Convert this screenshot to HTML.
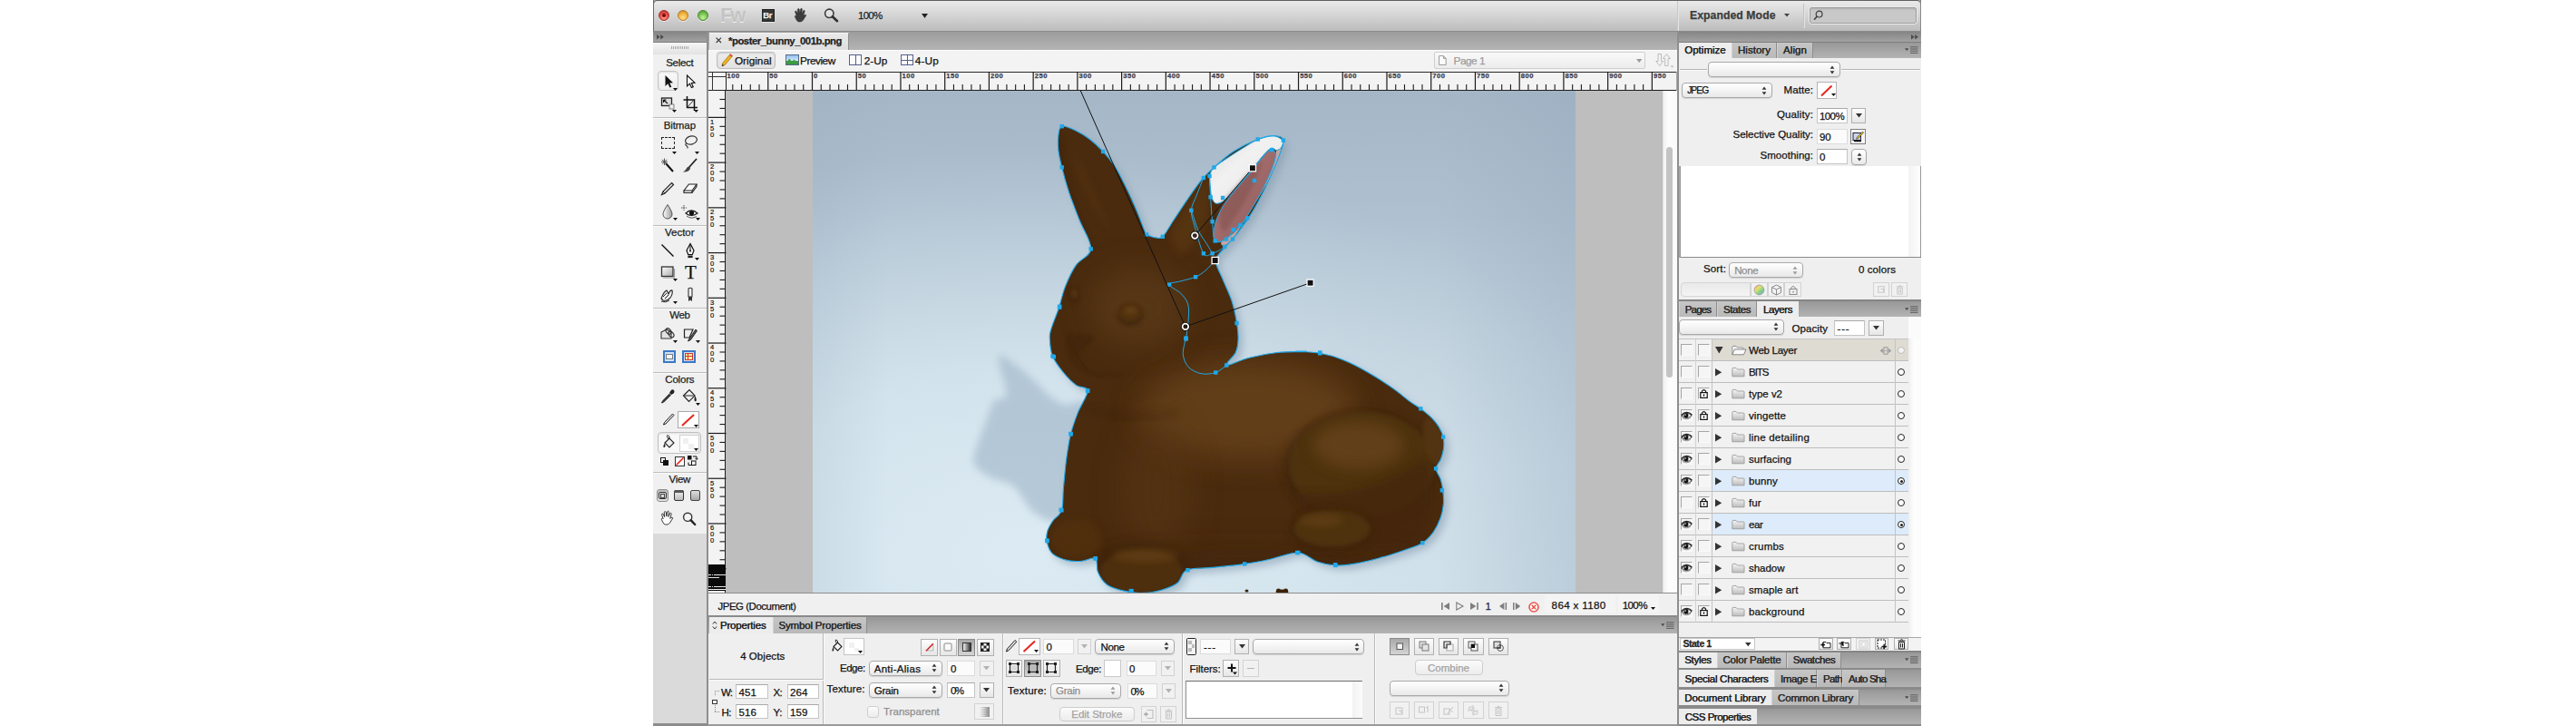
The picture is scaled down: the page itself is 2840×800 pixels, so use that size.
<!DOCTYPE html><html><head><meta charset="utf-8"><title>Fireworks</title><style>
html,body{margin:0;padding:0;background:#fff;}
body{width:2840px;height:800px;overflow:hidden;position:relative;font-family:"Liberation Sans",sans-serif;}
#r{position:absolute;left:0;top:0;width:2840px;height:800px;overflow:hidden;}
#r div{position:absolute;box-sizing:border-box;}
#r svg{position:absolute;overflow:visible;}
.t{position:absolute;white-space:nowrap;line-height:16px;height:16px;-webkit-text-stroke:.25px;}
.strip{background:linear-gradient(#989898,#b3b3b3);}
.tabA{background:#ededed;}
.tabI{background:linear-gradient(#c6c6c6,#b9b9b9);border-right:1px solid #8e8e8e;border-left:1px solid #d0d0d0;}
.dd{background:linear-gradient(#ffffff,#e9e9e9);border:1px solid #a9a9a9;border-radius:4px;box-shadow:0 1px 1px rgba(0,0,0,.12);}
.fld{background:#fff;border:1px solid #c4c4c4;border-top-color:#a8a8a8;}
.fldd{background:#fbfbfb;border:1px solid #dcdcdc;}
.btn{background:linear-gradient(#fdfdfd,#e6e6e6);border:1px solid #b0b0b0;}
.btnd{background:#f1f1f1;border:1px solid #d2d2d2;}
.btnp{background:linear-gradient(#a9a9a9,#d4d4d4);border:1px solid #8a8a8a;}
</style></head><body><div id="r">
<div style="left:720px;top:0px;width:1398px;height:800px;background:#a7a7a7;border-left:1px solid #6a6a6a;border-right:1.5px solid #7c7c7c;"></div>
<div style="left:720px;top:0px;width:1398px;height:34.5px;background:linear-gradient(#eaeaea 0%,#d6d6d6 45%,#bcbcbc 100%);border-top:1px solid #5f5f5f;border-bottom:1px solid #8b8b8b;border-left:1px solid #6a6a6a;border-right:1px solid #8a8a8a;border-radius:5px 5px 0 0;"></div>
<div style="left:725.8px;top:10.8px;width:12px;height:12px;border-radius:50%;background:radial-gradient(circle at 50% 75%,#ff9a8a 0%,#e24a43 55%,#a8312c 100%);border:1px solid #a8312c;box-shadow:0 1px 0 rgba(255,255,255,.6);"></div>
<div style="left:729.8px;top:14.8px;width:4px;height:4px;border-radius:50%;background:#7a0b0b;"></div>
<div style="left:746.9px;top:10.8px;width:12px;height:12px;border-radius:50%;background:radial-gradient(circle at 50% 75%,#ffe08a 0%,#f0b13c 55%,#b6802a 100%);border:1px solid #b6802a;box-shadow:0 1px 0 rgba(255,255,255,.6);"></div>
<div style="left:768.6px;top:10.8px;width:12px;height:12px;border-radius:50%;background:radial-gradient(circle at 50% 75%,#c6f09a 0%,#74c24c 55%,#4b8a34 100%);border:1px solid #4b8a34;box-shadow:0 1px 0 rgba(255,255,255,.6);"></div>
<span class="t" style="left:794px;top:4px;font-size:22px;font-weight:700;line-height:26px;height:26px;letter-spacing:-2.2px;color:#c3c3c3;-webkit-text-stroke:0;text-shadow:0 1px 0 #f2f2f2;">Fw</span>
<div style="left:839.8px;top:9.8px;width:14px;height:13.8px;background:#353535;border:1px solid #222;box-shadow:0 1px 0 #e6e6e6;"></div>
<span class="t" style="left:841.3px;top:8.6px;font-size:9.5px;font-weight:700;color:#efefef;letter-spacing:-.4px;">Br</span>
<svg style="left:873px;top:8px" width="18" height="18" viewBox="0 0 18 18"><path d="M5.2 9.5 L3.6 5.2 Q3.4 4.2 4.3 4.1 Q5 4 5.4 4.9 L6.6 7.6 L6.3 2.6 Q6.4 1.6 7.3 1.6 Q8.1 1.6 8.3 2.6 L8.8 7 L9.6 2 Q9.9 1.1 10.7 1.3 Q11.5 1.5 11.4 2.5 L10.9 7.4 L12.6 3.8 Q13.1 3 13.8 3.4 Q14.5 3.8 14.2 4.7 L12.7 9.3 Q13.9 8.3 15 8.3 Q16 8.5 15.6 9.3 L12.4 14.2 Q11.4 16 9.2 16 L7.6 16 Q5.8 15.6 5 13.8 L3.4 10.6 Q3.2 9.4 4 9.2 Q4.7 9 5.2 9.5Z" fill="#3d3d3d" stroke="#2b2b2b" stroke-width=".5"/></svg>
<svg style="left:907px;top:8px" width="19" height="18" viewBox="0 0 19 18"><circle cx="7.3" cy="6.8" r="4.7" fill="rgba(255,255,255,.25)" stroke="#3a3a3a" stroke-width="1.6"/><path d="M10.8 10.2 L16 15.2" stroke="#2e2e2e" stroke-width="2.6" stroke-linecap="round"/></svg>
<span class="t" style="left:946.00px;top:9.00px;font-size:11.5px;color:#222;letter-spacing:-0.728px;">100%</span>
<svg style="left:1015.5px;top:14.5px" width="8" height="6"><path d="M0 0H7L3.5 5Z" fill="#222"/></svg>
<div style="left:1849px;top:1px;width:1px;height:33px;background:#c9c9c9;"></div>
<div style="left:1850px;top:1px;width:1px;height:33px;background:#e4e4e4;"></div>
<span class="t" style="left:1863.00px;top:8.50px;font-size:12.2px;font-weight:700;color:#3c3c3c;letter-spacing:0.082px;">Expanded Mode</span>
<svg style="left:1967px;top:15px" width="7" height="5"><path d="M0 0H6L3 3.5Z" fill="#444"/></svg>
<div style="left:1987.5px;top:4px;width:1px;height:27px;background:#c4c4c4;"></div>
<div style="left:1988.5px;top:4px;width:1px;height:27px;background:#e2e2e2;"></div>
<div style="left:1993.5px;top:7.2px;width:120.5px;height:19.6px;background:#c8c8c8;border:1.5px solid #ececec;border-radius:3.5px;box-shadow:inset 0 0 0 1px #9c9c9c,inset 0 2px 2px rgba(0,0,0,.12);"></div>
<svg style="left:1998px;top:10px" width="14" height="14" viewBox="0 0 14 14"><circle cx="7.6" cy="5.6" r="3.4" fill="none" stroke="#3f3f3f" stroke-width="1.2"/><path d="M5.3 8 L2 11.8" stroke="#3f3f3f" stroke-width="1.6"/></svg>
<div style="left:720px;top:34.5px;width:58.5px;height:766px;background:#dadada;"></div>
<div style="left:720px;top:34.5px;width:58.5px;height:12px;background:linear-gradient(#858585,#a2a2a2);border-bottom:1px solid #7d7d7d;"></div>
<svg style="left:724px;top:37.5px" width="9" height="6"><path d="M0 0L3.6 2.7L0 5.4ZM4.2 0L7.8 2.7L4.2 5.4Z" fill="#4a4a4a"/></svg>
<div style="left:720px;top:46.5px;width:58.5px;height:541px;background:#f0f0f0;"></div>
<div style="left:720px;top:46.5px;width:58.5px;height:13.5px;background:linear-gradient(#f6f6f6,#e2e2e2);"></div>
<div style="left:739.6px;top:51.2px;width:1px;height:3px;background:#a8a8a8;"></div>
<div style="left:741.6px;top:51.2px;width:1px;height:3px;background:#a8a8a8;"></div>
<div style="left:743.6px;top:51.2px;width:1px;height:3px;background:#a8a8a8;"></div>
<div style="left:745.6px;top:51.2px;width:1px;height:3px;background:#a8a8a8;"></div>
<div style="left:747.6px;top:51.2px;width:1px;height:3px;background:#a8a8a8;"></div>
<div style="left:749.6px;top:51.2px;width:1px;height:3px;background:#a8a8a8;"></div>
<div style="left:751.6px;top:51.2px;width:1px;height:3px;background:#a8a8a8;"></div>
<div style="left:753.6px;top:51.2px;width:1px;height:3px;background:#a8a8a8;"></div>
<div style="left:755.6px;top:51.2px;width:1px;height:3px;background:#a8a8a8;"></div>
<div style="left:757.6px;top:51.2px;width:1px;height:3px;background:#a8a8a8;"></div>
<div style="left:778.5px;top:34.5px;width:2px;height:766px;background:#8f8f8f;"></div>
<div style="left:720px;top:797px;width:58.5px;height:3px;background:#8c8c8c;"></div>
<div style="left:720px;top:128.5px;width:58.5px;height:1px;background:#bdbdbd;"></div>
<div style="left:720px;top:129.5px;width:58.5px;height:1px;background:#fafafa;"></div>
<div style="left:720px;top:248px;width:58.5px;height:1px;background:#bdbdbd;"></div>
<div style="left:720px;top:249px;width:58.5px;height:1px;background:#fafafa;"></div>
<div style="left:720px;top:339.2px;width:58.5px;height:1px;background:#bdbdbd;"></div>
<div style="left:720px;top:340.2px;width:58.5px;height:1px;background:#fafafa;"></div>
<div style="left:720px;top:410.2px;width:58.5px;height:1px;background:#bdbdbd;"></div>
<div style="left:720px;top:411.2px;width:58.5px;height:1px;background:#fafafa;"></div>
<div style="left:720px;top:519.9px;width:58.5px;height:1px;background:#bdbdbd;"></div>
<div style="left:720px;top:520.9px;width:58.5px;height:1px;background:#fafafa;"></div>
<span class="t" style="left:734.15px;top:61.00px;font-size:11.5px;color:#1c1c1c;letter-spacing:-0.277px;">Select</span>
<span class="t" style="left:731.65px;top:129.50px;font-size:11.5px;color:#1c1c1c;letter-spacing:-0.082px;">Bitmap</span>
<span class="t" style="left:733.05px;top:248.20px;font-size:11.5px;color:#1c1c1c;letter-spacing:-0.017px;">Vector</span>
<span class="t" style="left:738.30px;top:339.00px;font-size:11.5px;color:#1c1c1c;letter-spacing:-0.479px;">Web</span>
<span class="t" style="left:733.30px;top:409.80px;font-size:11.5px;color:#1c1c1c;letter-spacing:-0.205px;">Colors</span>
<span class="t" style="left:737.55px;top:520.30px;font-size:11.5px;color:#1c1c1c;letter-spacing:-0.304px;">View</span>
<div style="left:725.3px;top:78.2px;width:22.7px;height:22.2px;background:linear-gradient(#fafafa,#ededed);border:1px solid #c4c4c4;border-radius:4px;box-shadow:inset 0 1px 2px rgba(0,0,0,.12);"></div>
<svg style="left:727.3px;top:79.8px" width="20" height="20" viewBox="0 0 20 20"><path d="M6.5 3 L6.5 15 L9.4 12.2 L11.4 16.6 L13.3 15.7 L11.3 11.4 L15 11.2Z" fill="#111"/></svg>
<svg style="left:741.5px;top:96.5px" width="5" height="4"><path d="M0 0H5L2.5 3Z" fill="#111"/></svg>
<svg style="left:750.9px;top:80.4px" width="20" height="20" viewBox="0 0 20 20"><path d="M6.5 3 L6.5 15 L9.4 12.2 L11.4 16.6 L13.3 15.7 L11.3 11.4 L15 11.2Z" fill="#fff" stroke="#111" stroke-width="1.1"/></svg>
<svg style="left:726.3px;top:104px" width="20" height="20" viewBox="0 0 20 20"><rect x="3.5" y="4" width="11" height="8.5" fill="#ddd" stroke="#222" stroke-width="1.3"/><path d="M5.5 6 L10 10 M5.5 6 h3 M5.5 6 v3" stroke="#111" stroke-width="1.1" fill="none"/><rect x="12" y="11" width="5" height="5" fill="#eee" stroke="#666" stroke-width=".8"/></svg>
<svg style="left:741px;top:121px" width="5" height="4"><path d="M0 0H5L2.5 3Z" fill="#111"/></svg>
<svg style="left:750.9px;top:104px" width="20" height="20" viewBox="0 0 20 20"><path d="M6.5 2 V14.5 H18 M2.5 6 H14.5 V18" stroke="#111" stroke-width="1.5" fill="none"/><path d="M6.5 14.5 L15 5" stroke="#333" stroke-width="1"/></svg>
<svg style="left:765px;top:121px" width="5" height="4"><path d="M0 0H5L2.5 3Z" fill="#111"/></svg>
<div style="left:729px;top:150.6px;width:14.5px;height:13.4px;border:1.2px dashed #222;"></div>
<svg style="left:741px;top:167px" width="5" height="4"><path d="M0 0H5L2.5 3Z" fill="#111"/></svg>
<svg style="left:750.9px;top:147.4px" width="20" height="20" viewBox="0 0 20 20"><ellipse cx="11" cy="7.5" rx="6.5" ry="4.5" fill="none" stroke="#333" stroke-width="1.2" transform="rotate(-15 11 7.5)"/><path d="M6 10.5 Q4 12 5.5 13.5 Q7.5 14 7 16.5" stroke="#333" stroke-width="1.1" fill="none"/></svg>
<svg style="left:766px;top:167px" width="5" height="4"><path d="M0 0H5L2.5 3Z" fill="#111"/></svg>
<svg style="left:726.3px;top:172.4px" width="20" height="20" viewBox="0 0 20 20"><path d="M8 8 L16 17" stroke="#111" stroke-width="2"/><path d="M6.5 2.5 V10 M3 6.2 H10 M4 3.8 L9 8.8 M9 3.8 L4 8.8" stroke="#444" stroke-width=".9"/></svg>
<svg style="left:751.4px;top:172.4px" width="20" height="20" viewBox="0 0 20 20"><path d="M17 3 L9 12" stroke="#222" stroke-width="1.8"/><path d="M9 11 Q6 12 5 15 Q3.5 17 2 17.2 Q6 18 8.5 16 Q10.5 14 10 12Z" fill="#444"/></svg>
<svg style="left:726px;top:198px" width="20" height="20" viewBox="0 0 20 20"><path d="M14.5 3.5 L16.5 5.5 L7 15 L3.5 16.5 L5 13Z" fill="#eee" stroke="#222" stroke-width="1.2"/><path d="M5 13 L7 15" stroke="#222"/></svg>
<svg style="left:751px;top:198px" width="20" height="20" viewBox="0 0 20 20"><path d="M8.5 5 L17 5 L12 12 L3 12Z" fill="#fafafa" stroke="#222" stroke-width="1.1"/><path d="M3 12 V14.5 H12 V12 M12 14.5 L17 7.5 V5" fill="none" stroke="#222" stroke-width="1.1"/></svg>
<svg style="left:726px;top:223px" width="20" height="20" viewBox="0 0 20 20"><path d="M10 2.5 Q15 10 15 13 A5 5 0 0 1 5 13 Q5 10 10 2.5Z" fill="url(#dropg)" stroke="#555" stroke-width="1"/><defs><linearGradient id="dropg" x1="0" x2="1"><stop offset="0" stop-color="#fff"/><stop offset="1" stop-color="#9a9a9a"/></linearGradient></defs></svg>
<svg style="left:742px;top:240px" width="5" height="4"><path d="M0 0H5L2.5 3Z" fill="#111"/></svg>
<svg style="left:752px;top:224px" width="20" height="20" viewBox="0 0 20 20"><path d="M4 11 Q10 5 17 11 Q10 16 4 11Z" fill="#fff" stroke="#222" stroke-width="1.2"/><circle cx="10.5" cy="10.8" r="2.6" fill="#111"/><path d="M2 2 V8 M-1 5 H5" stroke="#333" stroke-width=".9" stroke-dasharray="1.5 1"/><path d="M5 14 Q10 18 16 14.5" stroke="#555" fill="none"/></svg>
<svg style="left:767px;top:240px" width="5" height="4"><path d="M0 0H5L2.5 3Z" fill="#111"/></svg>
<svg style="left:726px;top:266px" width="20" height="20" viewBox="0 0 20 20"><path d="M3.5 3.5 L16.5 16.5" stroke="#111" stroke-width="1.4"/></svg>
<svg style="left:751px;top:267px" width="20" height="20" viewBox="0 0 20 20"><path d="M10 1.5 L14 9 L12.3 13.5 H7.7 L6 9Z" fill="#f4f4f4" stroke="#111" stroke-width="1.2"/><path d="M10 3 V9" stroke="#111"/><circle cx="10" cy="9.6" r="1" fill="#111"/><rect x="7.4" y="14.5" width="5.2" height="2.6" fill="#222"/></svg>
<svg style="left:766px;top:284px" width="5" height="4"><path d="M0 0H5L2.5 3Z" fill="#111"/></svg>
<svg style="left:726px;top:290px" width="20" height="20" viewBox="0 0 20 20"><rect x="3.5" y="4" width="12.5" height="10.5" fill="url(#rg)" stroke="#333" stroke-width="1.3"/><path d="M5 16 H17.5 V6" stroke="#999" stroke-width="1.2" fill="none"/><defs><linearGradient id="rg" x1="0" y1="0" x2="1" y2="1"><stop offset="0" stop-color="#fff"/><stop offset="1" stop-color="#aaa"/></linearGradient></defs></svg>
<svg style="left:742px;top:307px" width="5" height="4"><path d="M0 0H5L2.5 3Z" fill="#111"/></svg>
<span class="t" style="left:755px;top:288px;font-family:'Liberation Serif',serif;font-size:21px;line-height:24px;height:24px;color:#111;">T</span>
<svg style="left:726px;top:315px" width="20" height="20" viewBox="0 0 20 20"><path d="M3 14 Q6 6 9 5 L11 9 Q13 4 15 5 Q16 9 13 13 Q10 17 5 16 Z" fill="#eee" stroke="#222" stroke-width="1.1"/><path d="M5 12 L9 8 M7 14 L11 10 M3 17 Q8 19 12 16" stroke="#222" stroke-width="1" fill="none"/></svg>
<svg style="left:742px;top:332px" width="5" height="4"><path d="M0 0H5L2.5 3Z" fill="#111"/></svg>
<svg style="left:751px;top:315px" width="20" height="20" viewBox="0 0 20 20"><path d="M8 3 Q10 1.5 12 3 V12 H8Z" fill="#f4f4f4" stroke="#333" stroke-width="1.1"/><path d="M8 12 H12 V17 L10 15.6 L8 17Z" fill="#333"/></svg>
<svg style="left:726px;top:358.7px" width="20" height="20" viewBox="0 0 20 20"><path d="M3 7 L9 4 L14 7 V14 H3Z" fill="#e2e2e2" stroke="#333" stroke-width="1.1"/><ellipse cx="11" cy="6" rx="2.4" ry="3.6" fill="none" stroke="#333" stroke-width="1.2" transform="rotate(-40 11 6)"/><ellipse cx="14" cy="9.5" rx="2.4" ry="3.6" fill="none" stroke="#333" stroke-width="1.2" transform="rotate(-40 14 9.5)"/></svg>
<svg style="left:742px;top:375px" width="5" height="4"><path d="M0 0H5L2.5 3Z" fill="#111"/></svg>
<svg style="left:751px;top:358.7px" width="20" height="20" viewBox="0 0 20 20"><path d="M3.5 4 H13 L9 13 H3.5Z" fill="#eee" stroke="#222" stroke-width="1.2"/><path d="M16 4 L9 14 L7.5 17 L10.5 15.5 L17.5 5.5Z" fill="#555" stroke="#111" stroke-width=".8"/></svg>
<svg style="left:767px;top:375px" width="5" height="4"><path d="M0 0H5L2.5 3Z" fill="#111"/></svg>
<div style="left:730.5px;top:385.5px;width:14.5px;height:14.5px;background:#cfe2f7;border:2px solid #3b78c8;"></div>
<div style="left:733.5px;top:389.5px;width:8.5px;height:6px;background:#f6f6f6;border:1px solid #7a7a7a;"></div>
<div style="left:752px;top:385.5px;width:15px;height:14.5px;background:#cfe2f7;border:2px solid #3b78c8;"></div>
<div style="left:755px;top:388.5px;width:9px;height:8px;background:#ffe9a8;border:1px solid #d03a2a;"></div>
<div style="left:755px;top:391.5px;width:9px;height:1px;background:#d03a2a;"></div>
<div style="left:758px;top:388.5px;width:1px;height:8px;background:#d03a2a;"></div>
<svg style="left:726px;top:426.8px" width="20" height="20" viewBox="0 0 20 20"><path d="M16.5 2.5 Q18.5 4.5 16.5 6.5 L14 8 L12 6 L13.5 3.5 Q15 1.5 16.5 2.5Z" fill="#222"/><path d="M12.5 7 L5 14.5 L3.5 17 L6 15.5 L13.5 8" fill="#f0f0f0" stroke="#222" stroke-width="1.1"/></svg>
<svg style="left:750px;top:426.8px" width="20" height="20" viewBox="0 0 20 20"><path d="M3.5 9 L10 2.5 L16 9 L9.5 15.5Z" fill="#f2f2f2" stroke="#222" stroke-width="1.2"/><path d="M5 9 H14.5" stroke="#222"/><path d="M16 9 Q18.5 12.5 17.5 15 Q16 16 15.5 14 Q15.5 12 16 9Z" fill="#222"/></svg>
<svg style="left:767px;top:444px" width="5" height="4"><path d="M0 0H5L2.5 3Z" fill="#111"/></svg>
<svg style="left:727px;top:452px" width="20" height="20" viewBox="0 0 20 20"><path d="M14.5 4 L16 5.5 L7 15 L4.5 16 L5.5 13.5Z" fill="#ddd" stroke="#222" stroke-width="1"/></svg>
<div style="left:747.4px;top:453px;width:23.3px;height:19px;background:#fff;border:1px solid #a9a9a9;"></div>
<svg style="left:749px;top:454.5px" width="20" height="16"><path d="M3 14 L16 2" stroke="#e8261c" stroke-width="2"/></svg>
<svg style="left:764.5px;top:467.5px" width="5" height="4"><path d="M0 0H5L2.5 3Z" fill="#111"/></svg>
<div style="left:725px;top:476.3px;width:47.5px;height:23.3px;background:#f8f8f8;border:1px solid #c0c0c0;border-radius:4px;box-shadow:inset 0 1px 2px rgba(0,0,0,.1);"></div>
<svg style="left:727.7px;top:478px" width="20" height="20" viewBox="0 0 20 20"><path d="M5 10 L10 5 L15 10 L10 15Z" fill="#eee" stroke="#222" stroke-width="1.1"/><path d="M9 6 Q6 1.5 8.5 1.5 Q10.5 2 10 6" fill="none" stroke="#222"/><path d="M5 10 Q3 13 3.5 15 Q5 15.5 5.5 13.5Z" fill="#222"/></svg>
<div style="left:748.5px;top:478.5px;width:22.2px;height:19px;background:#fff;border:1px solid #d0d0d0;"></div>
<div style="left:753px;top:483px;width:6px;height:6px;background:#f0f0f0;"></div>
<div style="left:759px;top:489px;width:6px;height:6px;background:#f0f0f0;"></div>
<svg style="left:764.5px;top:493.5px" width="5" height="4"><path d="M0 0H5L2.5 3Z" fill="#111"/></svg>
<div style="left:727.5px;top:504px;width:6px;height:6px;background:#fff;border:1px solid #111;"></div>
<div style="left:730.5px;top:506.5px;width:6.5px;height:6.5px;background:#111;"></div>
<div style="left:743.5px;top:502.5px;width:11px;height:11px;background:#fff;border:1px solid #333;"></div>
<svg style="left:743.5px;top:502.5px" width="11" height="11"><path d="M1.5 9.5 L9.5 1.5" stroke="#e8261c" stroke-width="1.6"/></svg>
<svg style="left:754px;top:498px" width="20" height="20" viewBox="0 0 20 20"><rect x="4" y="4" width="4.5" height="4.5" fill="#111"/><rect x="8.5" y="10" width="4.5" height="4.5" fill="#fff" stroke="#111"/><path d="M10 5 h4 v3 M12.6 7 l1.4 1.6 l1.4 -1.6 M8 14.5 h-3 v-3" stroke="#111" fill="none" stroke-width="1"/></svg>
<div style="left:723.8px;top:539.3px;width:13.6px;height:13.6px;background:linear-gradient(#bdbdbd,#e2e2e2);border:1px solid #8c8c8c;border-radius:3px;"></div>
<div style="left:726.3px;top:541.8px;width:8.6px;height:8.6px;background:#d9d9d9;border:1px solid #333;border-radius:2px;"></div>
<div style="left:727.8px;top:544.3px;width:5.6px;height:4.6px;border:1px solid #444;"></div>
<div style="left:743px;top:540.3px;width:11.4px;height:11.4px;background:linear-gradient(#eee,#bbb);border:1px solid #333;border-radius:2px;"></div>
<div style="left:743px;top:540.3px;width:11.4px;height:3px;background:#555;border-radius:2px 2px 0 0;"></div>
<div style="left:760.6px;top:540.3px;width:11.4px;height:11.4px;background:linear-gradient(#ddd,#a9a9a9);border:1px solid #444;border-radius:2px;"></div>
<svg style="left:726px;top:562.4px" width="20" height="20" viewBox="0 0 20 20"><path d="M6.2 10.5 L4.6 6.2 Q4.4 5.2 5.3 5.1 Q6 5 6.4 5.9 L7.6 8.6 L7.3 3.6 Q7.4 2.6 8.3 2.6 Q9.1 2.6 9.3 3.6 L9.8 8 L10.6 3 Q10.9 2.1 11.7 2.3 Q12.5 2.5 12.4 3.5 L11.9 8.4 L13.6 4.8 Q14.1 4 14.8 4.4 Q15.5 4.8 15.2 5.7 L13.7 10.3 Q14.9 9.3 16 9.3 Q17 9.5 16.6 10.3 L13.4 15.2 Q12.4 17 10.2 17 L8.6 17 Q6.8 16.6 6 14.8 L4.4 11.6 Q4.2 10.4 5 10.2 Q5.7 10 6.2 10.5Z" fill="#fff" stroke="#222" stroke-width=".9" transform="translate(-1 -1)"/></svg>
<svg style="left:750px;top:562.4px" width="20" height="20" viewBox="0 0 20 20"><circle cx="8.2" cy="7.8" r="4.6" fill="#f4f4f4" stroke="#333" stroke-width="1.4"/><path d="M11.6 11.2 L16.2 16" stroke="#222" stroke-width="2.4" stroke-linecap="round"/></svg>
<div style="left:780.5px;top:34.5px;width:1068px;height:20px;background:linear-gradient(#9c9c9c,#b4b4b4);"></div>
<div style="left:781.5px;top:35.5px;width:154.5px;height:19px;background:linear-gradient(#e9e9e9,#dedede);border-right:1px solid #8f8f8f;border-top:1px solid #f4f4f4;"></div>
<svg style="left:788.6px;top:41.2px" width="7" height="7"><path d="M.6 .6L6 6M6 .6L.6 6" stroke="#333" stroke-width="1.1"/></svg>
<span class="t" style="left:803.00px;top:36.70px;font-size:11.3px;font-weight:700;color:#1f1f1f;letter-spacing:-0.454px;">*poster_bunny_001b.png</span>
<div style="left:780.5px;top:54.5px;width:1068px;height:24.5px;background:#f3f3f3;border-top:1px solid #fbfbfb;"></div>
<div style="left:790.3px;top:56.5px;width:65.2px;height:19.5px;background:linear-gradient(#ececec,#e2e2e2);border:1px solid #bdbdbd;border-radius:4px;box-shadow:inset 0 1px 2px rgba(0,0,0,.12);"></div>
<svg style="left:795px;top:58px" width="14" height="16" viewBox="0 0 14 16"><path d="M10.2 1.6 L12.6 3.6 L4.2 13.6 L1 15 L1.6 11.6Z" fill="#f2b01e" stroke="#9a6a10" stroke-width=".7"/><path d="M10.2 1.6 L12.6 3.6 L11.4 5 L9 3Z" fill="#e0564a"/><path d="M1 15 L1.4 12.6 L3 14.1Z" fill="#333"/></svg>
<span class="t" style="left:809.90px;top:58.80px;font-size:11.8px;color:#111;letter-spacing:0.005px;">Original</span>
<div style="left:866.4px;top:60.2px;width:14.2px;height:11.8px;background:linear-gradient(#8fc0ee 0%,#cfe6fa 55%,#49a84a 56%,#2f8a37 100%);border:1px solid #5a6b8c;"></div>
<svg style="left:867.4px;top:61.2px" width="12.2" height="9.8" viewBox="0 0 12.2 9.8"><path d="M0 8 L3.2 3.6 L6 7 L8.4 4.6 L12.2 8.6 V9.8 H0Z" fill="#3b9c43"/></svg>
<span class="t" style="left:882.00px;top:58.80px;font-size:11.8px;color:#111;letter-spacing:-0.452px;">Preview</span>
<div style="left:936px;top:60.2px;width:14.4px;height:11.8px;background:#fbfbfb;border:1px solid #55608c;"></div>
<div style="left:942.7px;top:60.2px;width:1px;height:11.8px;background:#55608c;"></div>
<span class="t" style="left:952.80px;top:58.80px;font-size:11.8px;color:#111;letter-spacing:0.006px;">2-Up</span>
<div style="left:993px;top:60.2px;width:14.4px;height:11.8px;background:#fbfbfb;border:1px solid #55608c;"></div>
<div style="left:999.7px;top:60.2px;width:1px;height:11.8px;background:#55608c;"></div>
<div style="left:993px;top:65.6px;width:14.4px;height:1px;background:#55608c;"></div>
<span class="t" style="left:1008.80px;top:58.80px;font-size:11.8px;color:#111;letter-spacing:0.156px;">4-Up</span>
<div style="left:1580.5px;top:57px;width:233.2px;height:19px;background:linear-gradient(#f9f9f9,#ececec);border:1px solid #cfcfcf;border-radius:2px;"></div>
<svg style="left:1585.5px;top:61px" width="9" height="11" viewBox="0 0 9 11"><path d="M.6 .6 H5.4 L8.2 3.4 V10.4 H.6Z M5.4 .6 V3.4 H8.2" fill="#fdfdfd" stroke="#9a9a9a" stroke-width="1"/></svg>
<span class="t" style="left:1602.50px;top:58.80px;font-size:11.8px;color:#9c9c9c;letter-spacing:-0.483px;">Page 1</span>
<svg style="left:1804px;top:64.5px" width="7" height="5"><path d="M0 0H6.4L3.2 4Z" fill="#9a9a9a"/></svg>
<svg style="left:1825px;top:58px" width="22" height="18" viewBox="0 0 22 18"><path d="M3 1.5 H6.5 V9.5 H8.8 L4.8 14.5 L.7 9.5 H3Z" fill="#f2f2f2" stroke="#bdbdbd" stroke-width="1"/><path d="M10.6 14.5 H14.1 V6.5 H16.4 L12.4 1.5 L8.3 6.5 H10.6Z" fill="#f2f2f2" stroke="#bdbdbd" stroke-width="1"/><path d="M16.5 14.5 H20.5 L18.5 16.8Z" fill="#bdbdbd"/></svg>
<div style="left:800px;top:99.5px;width:1032.5px;height:553.5px;background:#bebebe;"></div>
<svg style="left:895.5px;top:99.5px;overflow:hidden" width="841.5" height="553.5" viewBox="895.5 99.5 841.5 553.5"><defs>
<linearGradient id="bgv" x1="0" y1="0" x2="0" y2="1"><stop offset="0" stop-color="#a5b7c7"/><stop offset=".25" stop-color="#afc1d0"/><stop offset=".5" stop-color="#c0d1dd"/><stop offset=".75" stop-color="#cddde8"/><stop offset="1" stop-color="#d1e1eb"/></linearGradient>
<radialGradient id="bgl" cx="1130" cy="610" r="700" gradientUnits="userSpaceOnUse" gradientTransform="translate(1130 610) scale(1 .64) translate(-1130 -610)"><stop offset="0" stop-color="#dcebf3" stop-opacity="1"/><stop offset=".45" stop-color="#d6e6ef" stop-opacity=".8"/><stop offset=".8" stop-color="#cbdce7" stop-opacity=".3"/><stop offset="1" stop-color="#c2d3df" stop-opacity="0"/></radialGradient>
<linearGradient id="bge" x1="0" y1="0" x2="1" y2="0"><stop offset="0" stop-color="#8fa4b8" stop-opacity=".16"/><stop offset=".1" stop-color="#8fa4b8" stop-opacity="0"/><stop offset=".82" stop-color="#8fa4b8" stop-opacity="0"/><stop offset="1" stop-color="#8fa4b8" stop-opacity=".3"/></linearGradient>
<linearGradient id="pinkg" x1="0" y1="0" x2="1" y2="1"><stop offset="0" stop-color="#b48080"/><stop offset=".6" stop-color="#9c6666"/><stop offset="1" stop-color="#7b4a44"/></linearGradient>
<linearGradient id="whiteg" x1="0" y1="0" x2="1" y2="1"><stop offset="0" stop-color="#d9d9d9"/><stop offset=".4" stop-color="#f1f1f1"/><stop offset="1" stop-color="#e6e6e6"/></linearGradient>
<filter id="blur16" x="-50%" y="-50%" width="200%" height="200%"><feGaussianBlur stdDeviation="16"/></filter>
<filter id="blur8" x="-40%" y="-40%" width="180%" height="180%"><feGaussianBlur stdDeviation="8"/></filter>
<filter id="blur4" x="-30%" y="-30%" width="160%" height="160%"><feGaussianBlur stdDeviation="4"/></filter>
<filter id="blur2" x="-30%" y="-30%" width="160%" height="160%"><feGaussianBlur stdDeviation="2"/></filter>
<clipPath id="bclip"><path d="M1170.2,138.7C1173.4,137.8 1180.4,141.0 1185.6,143.4C1190.7,145.8 1196.0,149.2 1201.0,153.0C1206.0,156.9 1211.2,161.7 1215.7,166.5C1220.2,171.3 1224.1,175.8 1228.0,182.0C1232.0,188.1 1235.8,195.5 1239.6,203.2C1243.5,210.9 1247.5,219.6 1251.2,228.3C1254.9,236.9 1259.9,250.3 1262.0,255.3C1264.0,260.2 1261.8,257.0 1263.5,258.0C1265.3,258.9 1269.5,260.7 1272.4,261.1C1275.4,261.4 1277.7,263.5 1281.3,260.3C1284.8,257.1 1289.0,248.7 1293.6,241.8C1298.3,234.8 1303.9,226.0 1309.1,218.6C1314.2,211.2 1319.7,203.2 1324.5,197.4C1329.3,191.6 1332.2,189.0 1338.0,183.9C1343.8,178.7 1351.2,171.7 1359.2,166.5C1367.3,161.4 1378.5,155.9 1386.2,153.0C1394.0,150.1 1400.8,149.0 1405.5,149.2C1410.2,149.4 1413.8,150.3 1414.4,154.2C1415.0,158.0 1412.2,164.8 1409.4,172.3C1406.6,179.8 1401.7,191.0 1397.8,199.3C1394.0,207.7 1390.1,215.4 1386.2,222.5C1382.4,229.5 1378.5,236.0 1374.7,241.8C1370.8,247.6 1366.9,252.4 1363.1,257.2C1359.2,262.0 1355.4,265.9 1351.5,270.7C1347.6,275.5 1340.6,280.0 1339.9,286.1C1339.3,292.2 1344.8,300.0 1347.6,307.4C1350.5,314.8 1354.7,322.5 1357.3,330.5C1359.9,338.5 1361.9,348.3 1363.1,355.6C1364.3,362.8 1364.8,368.6 1364.5,374.0C1364.3,379.4 1363.9,383.3 1361.7,388.0C1359.6,392.6 1349.4,401.0 1351.7,402.0C1354.1,403.0 1366.4,396.3 1375.7,394.0C1385.0,391.6 1397.0,389.2 1407.7,388.0C1418.3,386.8 1436.3,387.0 1439.6,386.8C1443.0,386.6 1425.5,386.4 1428.0,386.8C1430.5,387.1 1446.1,387.2 1454.7,388.8C1463.4,390.3 1471.1,392.4 1479.9,396.0C1488.8,399.5 1498.6,404.6 1507.9,410.0C1517.2,415.3 1528.2,422.6 1535.8,427.9C1543.5,433.3 1548.8,438.3 1553.8,441.9C1558.8,445.6 1561.8,446.9 1565.8,449.9C1569.8,452.9 1574.5,456.6 1577.8,459.9C1581.1,463.2 1583.7,466.4 1585.8,469.9C1587.9,473.4 1589.7,477.1 1590.6,481.1C1591.5,485.1 1591.5,489.7 1591.0,493.9C1590.5,498.0 1589.2,502.2 1587.8,505.8C1586.4,509.5 1582.6,512.2 1582.6,515.8C1582.6,519.5 1586.5,523.8 1587.8,527.8C1589.1,531.8 1589.7,535.5 1590.2,539.8C1590.7,544.1 1591.4,548.8 1591.0,553.8C1590.6,558.8 1589.7,564.4 1587.8,569.8C1585.9,575.1 1583.1,581.1 1579.8,585.8C1576.5,590.4 1573.1,594.4 1567.8,597.7C1562.5,601.1 1555.8,602.9 1547.8,605.7C1539.8,608.5 1529.2,612.0 1519.9,614.5C1510.5,617.1 1499.9,619.6 1491.9,620.9C1483.9,622.3 1478.6,622.9 1471.9,622.5C1465.3,622.1 1458.8,620.9 1451.9,618.5C1445.1,616.2 1439.5,609.0 1430.8,608.5C1422.1,608.1 1409.5,613.7 1399.7,615.7C1389.8,617.8 1382.4,619.4 1371.7,620.9C1361.1,622.5 1346.4,623.8 1335.8,624.9C1325.1,626.0 1314.1,624.9 1307.8,627.7C1301.5,630.5 1302.5,638.0 1297.8,641.7C1293.1,645.4 1286.1,647.8 1279.8,649.7C1273.5,651.6 1266.5,652.7 1259.8,652.9C1253.2,653.1 1246.5,652.4 1239.9,650.9C1233.2,649.4 1224.9,647.2 1219.9,643.7C1214.9,640.2 1212.0,634.5 1209.9,629.7C1207.8,624.9 1210.1,616.9 1207.1,614.9C1204.1,612.9 1197.1,617.4 1191.9,617.7C1186.7,618.1 1181.3,618.3 1175.9,616.9C1170.6,615.6 1163.6,612.9 1160.0,609.7C1156.3,606.5 1155.0,601.7 1154.0,597.7C1153.0,593.7 1153.0,589.8 1154.0,585.8C1155.0,581.8 1157.3,577.8 1160.0,573.8C1162.6,569.8 1167.9,567.8 1169.9,561.8C1171.9,555.8 1171.1,547.1 1171.9,537.8C1172.8,528.5 1173.8,515.8 1175.1,505.8C1176.5,495.9 1177.8,486.5 1179.9,477.9C1182.1,469.2 1184.8,461.9 1187.9,453.9C1191.1,445.9 1199.0,434.9 1198.7,429.9C1198.4,424.9 1190.4,427.3 1185.9,423.9C1181.5,420.6 1176.3,415.3 1171.9,410.0C1167.6,404.6 1162.5,398.3 1160.0,392.0C1157.4,385.6 1157.0,377.1 1156.8,372.0C1156.5,366.9 1156.9,367.0 1158.6,361.4C1160.3,355.7 1164.5,345.9 1167.1,338.2C1169.6,330.5 1170.9,322.8 1174.0,315.1C1177.1,307.4 1180.9,298.8 1185.6,291.9C1190.3,285.0 1201.5,282.1 1202.2,273.8C1202.8,265.4 1193.5,252.2 1189.5,241.8C1185.4,231.3 1181.1,220.5 1177.9,210.9C1174.7,201.2 1172.1,191.6 1170.2,183.9C1168.2,176.2 1166.9,170.4 1166.3,164.6C1165.7,158.8 1165.7,153.5 1166.3,149.2C1166.9,144.9 1166.9,139.7 1170.2,138.7Z"/></clipPath>
</defs><rect x="895.5" y="99.5" width="841.5" height="553.5" fill="url(#bgv)"/><rect x="895.5" y="99.5" width="841.5" height="553.5" fill="url(#bgl)"/><rect x="895.5" y="99.5" width="841.5" height="553.5" fill="url(#bge)"/>
<path d="M1102.1,390.6C1105.2,391.6 1113.0,396.9 1118.8,401.2C1124.6,405.5 1130.9,410.8 1137.0,416.4C1143.0,421.9 1149.1,429.7 1155.2,434.5C1161.2,439.3 1166.3,443.4 1173.3,445.2C1180.4,446.9 1193.5,435.8 1197.6,445.2C1201.6,454.5 1200.1,481.8 1197.6,501.2C1195.1,520.7 1188.5,549.7 1182.4,561.8C1176.4,573.9 1168.3,573.4 1161.2,573.9C1154.1,574.4 1145.6,568.9 1140.0,564.8C1134.4,560.8 1131.9,554.7 1127.9,549.7C1123.8,544.6 1121.8,538.6 1115.8,534.5C1109.7,530.5 1098.3,529.0 1091.5,525.5C1084.7,521.9 1077.9,517.4 1074.8,513.3C1071.8,509.3 1072.6,506.3 1073.3,501.2C1074.1,496.2 1076.9,490.1 1079.4,483.0C1081.9,476.0 1085.7,465.9 1088.5,458.8C1091.3,451.7 1092.9,444.0 1096.1,440.6C1099.2,437.2 1105.3,440.7 1107.3,438.2C1109.3,435.7 1108.9,430.6 1108.2,425.5C1107.4,420.3 1104.0,412.3 1102.7,407.3C1101.5,402.2 1100.7,397.9 1100.6,395.2C1100.5,392.4 1099.1,389.6 1102.1,390.6Z" fill="#9db3c6" opacity=".6" filter="url(#blur4)"/><path d="M1170.2,138.7C1173.4,137.8 1180.4,141.0 1185.6,143.4C1190.7,145.8 1196.0,149.2 1201.0,153.0C1206.0,156.9 1211.2,161.7 1215.7,166.5C1220.2,171.3 1224.1,175.8 1228.0,182.0C1232.0,188.1 1235.8,195.5 1239.6,203.2C1243.5,210.9 1247.5,219.6 1251.2,228.3C1254.9,236.9 1259.9,250.3 1262.0,255.3C1264.0,260.2 1261.8,257.0 1263.5,258.0C1265.3,258.9 1269.5,260.7 1272.4,261.1C1275.4,261.4 1277.7,263.5 1281.3,260.3C1284.8,257.1 1289.0,248.7 1293.6,241.8C1298.3,234.8 1303.9,226.0 1309.1,218.6C1314.2,211.2 1319.7,203.2 1324.5,197.4C1329.3,191.6 1332.2,189.0 1338.0,183.9C1343.8,178.7 1351.2,171.7 1359.2,166.5C1367.3,161.4 1378.5,155.9 1386.2,153.0C1394.0,150.1 1400.8,149.0 1405.5,149.2C1410.2,149.4 1413.8,150.3 1414.4,154.2C1415.0,158.0 1412.2,164.8 1409.4,172.3C1406.6,179.8 1401.7,191.0 1397.8,199.3C1394.0,207.7 1390.1,215.4 1386.2,222.5C1382.4,229.5 1378.5,236.0 1374.7,241.8C1370.8,247.6 1366.9,252.4 1363.1,257.2C1359.2,262.0 1355.4,265.9 1351.5,270.7C1347.6,275.5 1340.6,280.0 1339.9,286.1C1339.3,292.2 1344.8,300.0 1347.6,307.4C1350.5,314.8 1354.7,322.5 1357.3,330.5C1359.9,338.5 1361.9,348.3 1363.1,355.6C1364.3,362.8 1364.8,368.6 1364.5,374.0C1364.3,379.4 1363.9,383.3 1361.7,388.0C1359.6,392.6 1349.4,401.0 1351.7,402.0C1354.1,403.0 1366.4,396.3 1375.7,394.0C1385.0,391.6 1397.0,389.2 1407.7,388.0C1418.3,386.8 1436.3,387.0 1439.6,386.8C1443.0,386.6 1425.5,386.4 1428.0,386.8C1430.5,387.1 1446.1,387.2 1454.7,388.8C1463.4,390.3 1471.1,392.4 1479.9,396.0C1488.8,399.5 1498.6,404.6 1507.9,410.0C1517.2,415.3 1528.2,422.6 1535.8,427.9C1543.5,433.3 1548.8,438.3 1553.8,441.9C1558.8,445.6 1561.8,446.9 1565.8,449.9C1569.8,452.9 1574.5,456.6 1577.8,459.9C1581.1,463.2 1583.7,466.4 1585.8,469.9C1587.9,473.4 1589.7,477.1 1590.6,481.1C1591.5,485.1 1591.5,489.7 1591.0,493.9C1590.5,498.0 1589.2,502.2 1587.8,505.8C1586.4,509.5 1582.6,512.2 1582.6,515.8C1582.6,519.5 1586.5,523.8 1587.8,527.8C1589.1,531.8 1589.7,535.5 1590.2,539.8C1590.7,544.1 1591.4,548.8 1591.0,553.8C1590.6,558.8 1589.7,564.4 1587.8,569.8C1585.9,575.1 1583.1,581.1 1579.8,585.8C1576.5,590.4 1573.1,594.4 1567.8,597.7C1562.5,601.1 1555.8,602.9 1547.8,605.7C1539.8,608.5 1529.2,612.0 1519.9,614.5C1510.5,617.1 1499.9,619.6 1491.9,620.9C1483.9,622.3 1478.6,622.9 1471.9,622.5C1465.3,622.1 1458.8,620.9 1451.9,618.5C1445.1,616.2 1439.5,609.0 1430.8,608.5C1422.1,608.1 1409.5,613.7 1399.7,615.7C1389.8,617.8 1382.4,619.4 1371.7,620.9C1361.1,622.5 1346.4,623.8 1335.8,624.9C1325.1,626.0 1314.1,624.9 1307.8,627.7C1301.5,630.5 1302.5,638.0 1297.8,641.7C1293.1,645.4 1286.1,647.8 1279.8,649.7C1273.5,651.6 1266.5,652.7 1259.8,652.9C1253.2,653.1 1246.5,652.4 1239.9,650.9C1233.2,649.4 1224.9,647.2 1219.9,643.7C1214.9,640.2 1212.0,634.5 1209.9,629.7C1207.8,624.9 1210.1,616.9 1207.1,614.9C1204.1,612.9 1197.1,617.4 1191.9,617.7C1186.7,618.1 1181.3,618.3 1175.9,616.9C1170.6,615.6 1163.6,612.9 1160.0,609.7C1156.3,606.5 1155.0,601.7 1154.0,597.7C1153.0,593.7 1153.0,589.8 1154.0,585.8C1155.0,581.8 1157.3,577.8 1160.0,573.8C1162.6,569.8 1167.9,567.8 1169.9,561.8C1171.9,555.8 1171.1,547.1 1171.9,537.8C1172.8,528.5 1173.8,515.8 1175.1,505.8C1176.5,495.9 1177.8,486.5 1179.9,477.9C1182.1,469.2 1184.8,461.9 1187.9,453.9C1191.1,445.9 1199.0,434.9 1198.7,429.9C1198.4,424.9 1190.4,427.3 1185.9,423.9C1181.5,420.6 1176.3,415.3 1171.9,410.0C1167.6,404.6 1162.5,398.3 1160.0,392.0C1157.4,385.6 1157.0,377.1 1156.8,372.0C1156.5,366.9 1156.9,367.0 1158.6,361.4C1160.3,355.7 1164.5,345.9 1167.1,338.2C1169.6,330.5 1170.9,322.8 1174.0,315.1C1177.1,307.4 1180.9,298.8 1185.6,291.9C1190.3,285.0 1201.5,282.1 1202.2,273.8C1202.8,265.4 1193.5,252.2 1189.5,241.8C1185.4,231.3 1181.1,220.5 1177.9,210.9C1174.7,201.2 1172.1,191.6 1170.2,183.9C1168.2,176.2 1166.9,170.4 1166.3,164.6C1165.7,158.8 1165.7,153.5 1166.3,149.2C1166.9,144.9 1166.9,139.7 1170.2,138.7Z" fill="#8197ab" opacity=".55" filter="url(#blur4)" transform="translate(5 5)"/><path d="M1170.2,138.7C1173.4,137.8 1180.4,141.0 1185.6,143.4C1190.7,145.8 1196.0,149.2 1201.0,153.0C1206.0,156.9 1211.2,161.7 1215.7,166.5C1220.2,171.3 1224.1,175.8 1228.0,182.0C1232.0,188.1 1235.8,195.5 1239.6,203.2C1243.5,210.9 1247.5,219.6 1251.2,228.3C1254.9,236.9 1259.9,250.3 1262.0,255.3C1264.0,260.2 1261.8,257.0 1263.5,258.0C1265.3,258.9 1269.5,260.7 1272.4,261.1C1275.4,261.4 1277.7,263.5 1281.3,260.3C1284.8,257.1 1289.0,248.7 1293.6,241.8C1298.3,234.8 1303.9,226.0 1309.1,218.6C1314.2,211.2 1319.7,203.2 1324.5,197.4C1329.3,191.6 1332.2,189.0 1338.0,183.9C1343.8,178.7 1351.2,171.7 1359.2,166.5C1367.3,161.4 1378.5,155.9 1386.2,153.0C1394.0,150.1 1400.8,149.0 1405.5,149.2C1410.2,149.4 1413.8,150.3 1414.4,154.2C1415.0,158.0 1412.2,164.8 1409.4,172.3C1406.6,179.8 1401.7,191.0 1397.8,199.3C1394.0,207.7 1390.1,215.4 1386.2,222.5C1382.4,229.5 1378.5,236.0 1374.7,241.8C1370.8,247.6 1366.9,252.4 1363.1,257.2C1359.2,262.0 1355.4,265.9 1351.5,270.7C1347.6,275.5 1340.6,280.0 1339.9,286.1C1339.3,292.2 1344.8,300.0 1347.6,307.4C1350.5,314.8 1354.7,322.5 1357.3,330.5C1359.9,338.5 1361.9,348.3 1363.1,355.6C1364.3,362.8 1364.8,368.6 1364.5,374.0C1364.3,379.4 1363.9,383.3 1361.7,388.0C1359.6,392.6 1349.4,401.0 1351.7,402.0C1354.1,403.0 1366.4,396.3 1375.7,394.0C1385.0,391.6 1397.0,389.2 1407.7,388.0C1418.3,386.8 1436.3,387.0 1439.6,386.8C1443.0,386.6 1425.5,386.4 1428.0,386.8C1430.5,387.1 1446.1,387.2 1454.7,388.8C1463.4,390.3 1471.1,392.4 1479.9,396.0C1488.8,399.5 1498.6,404.6 1507.9,410.0C1517.2,415.3 1528.2,422.6 1535.8,427.9C1543.5,433.3 1548.8,438.3 1553.8,441.9C1558.8,445.6 1561.8,446.9 1565.8,449.9C1569.8,452.9 1574.5,456.6 1577.8,459.9C1581.1,463.2 1583.7,466.4 1585.8,469.9C1587.9,473.4 1589.7,477.1 1590.6,481.1C1591.5,485.1 1591.5,489.7 1591.0,493.9C1590.5,498.0 1589.2,502.2 1587.8,505.8C1586.4,509.5 1582.6,512.2 1582.6,515.8C1582.6,519.5 1586.5,523.8 1587.8,527.8C1589.1,531.8 1589.7,535.5 1590.2,539.8C1590.7,544.1 1591.4,548.8 1591.0,553.8C1590.6,558.8 1589.7,564.4 1587.8,569.8C1585.9,575.1 1583.1,581.1 1579.8,585.8C1576.5,590.4 1573.1,594.4 1567.8,597.7C1562.5,601.1 1555.8,602.9 1547.8,605.7C1539.8,608.5 1529.2,612.0 1519.9,614.5C1510.5,617.1 1499.9,619.6 1491.9,620.9C1483.9,622.3 1478.6,622.9 1471.9,622.5C1465.3,622.1 1458.8,620.9 1451.9,618.5C1445.1,616.2 1439.5,609.0 1430.8,608.5C1422.1,608.1 1409.5,613.7 1399.7,615.7C1389.8,617.8 1382.4,619.4 1371.7,620.9C1361.1,622.5 1346.4,623.8 1335.8,624.9C1325.1,626.0 1314.1,624.9 1307.8,627.7C1301.5,630.5 1302.5,638.0 1297.8,641.7C1293.1,645.4 1286.1,647.8 1279.8,649.7C1273.5,651.6 1266.5,652.7 1259.8,652.9C1253.2,653.1 1246.5,652.4 1239.9,650.9C1233.2,649.4 1224.9,647.2 1219.9,643.7C1214.9,640.2 1212.0,634.5 1209.9,629.7C1207.8,624.9 1210.1,616.9 1207.1,614.9C1204.1,612.9 1197.1,617.4 1191.9,617.7C1186.7,618.1 1181.3,618.3 1175.9,616.9C1170.6,615.6 1163.6,612.9 1160.0,609.7C1156.3,606.5 1155.0,601.7 1154.0,597.7C1153.0,593.7 1153.0,589.8 1154.0,585.8C1155.0,581.8 1157.3,577.8 1160.0,573.8C1162.6,569.8 1167.9,567.8 1169.9,561.8C1171.9,555.8 1171.1,547.1 1171.9,537.8C1172.8,528.5 1173.8,515.8 1175.1,505.8C1176.5,495.9 1177.8,486.5 1179.9,477.9C1182.1,469.2 1184.8,461.9 1187.9,453.9C1191.1,445.9 1199.0,434.9 1198.7,429.9C1198.4,424.9 1190.4,427.3 1185.9,423.9C1181.5,420.6 1176.3,415.3 1171.9,410.0C1167.6,404.6 1162.5,398.3 1160.0,392.0C1157.4,385.6 1157.0,377.1 1156.8,372.0C1156.5,366.9 1156.9,367.0 1158.6,361.4C1160.3,355.7 1164.5,345.9 1167.1,338.2C1169.6,330.5 1170.9,322.8 1174.0,315.1C1177.1,307.4 1180.9,298.8 1185.6,291.9C1190.3,285.0 1201.5,282.1 1202.2,273.8C1202.8,265.4 1193.5,252.2 1189.5,241.8C1185.4,231.3 1181.1,220.5 1177.9,210.9C1174.7,201.2 1172.1,191.6 1170.2,183.9C1168.2,176.2 1166.9,170.4 1166.3,164.6C1165.7,158.8 1165.7,153.5 1166.3,149.2C1166.9,144.9 1166.9,139.7 1170.2,138.7Z" fill="#4a2b0e"/><g clip-path="url(#bclip)"><ellipse cx="1375" cy="452" rx="120" ry="55" fill="#6a441a" opacity=".75" filter="url(#blur16)"/><ellipse cx="1255" cy="338" rx="55" ry="45" fill="#61401a" opacity=".55" filter="url(#blur16)"/><ellipse cx="1275" cy="540" rx="40" ry="80" fill="#5a3914" opacity=".5" filter="url(#blur16)"/><ellipse cx="1370" cy="655" rx="260" ry="50" fill="#3f2309" opacity=".5" filter="url(#blur16)"/><path d="M1196,446 Q1240,470 1300,452" stroke="#3a2007" stroke-width="7" fill="none" opacity=".3" filter="url(#blur4)"/><path d="M1178,152 Q1200,200 1228,262 Q1206,235 1188,190Z" fill="#6a4519" opacity=".28" filter="url(#blur4)"/><path d="M1170,145 Q1172,200 1205,272 L1190,275 Q1160,200 1166,150Z" fill="#3e2208" opacity=".4" filter="url(#blur2)"/><path d="M1288,258 Q1310,215 1335,190 L1330,245 Q1318,270 1300,282Z" fill="#6a4519" opacity=".35" filter="url(#blur4)"/><ellipse cx="1500" cy="514" rx="86" ry="64" fill="#3b2007" opacity=".5" filter="url(#blur4)"/><ellipse cx="1501" cy="512" rx="80" ry="59" fill="#4e3010" filter="url(#blur2)"/><ellipse cx="1497" cy="490" rx="50" ry="26" fill="#69441a" opacity=".75" filter="url(#blur8)"/><path d="M1428,542 Q1500,552 1572,505 Q1592,560 1560,605 L1440,612Z" fill="#45280b" opacity=".8" filter="url(#blur4)"/><ellipse cx="1468" cy="584" rx="46" ry="23" fill="#3a2007" opacity=".5" filter="url(#blur4)"/><ellipse cx="1468" cy="582" rx="42" ry="20" fill="#4e300f" filter="url(#blur2)"/><ellipse cx="1456" cy="573" rx="24" ry="7" fill="#644017" opacity=".7" filter="url(#blur4)"/><ellipse cx="1581" cy="487" rx="11" ry="28" fill="#593815" opacity=".7" filter="url(#blur2)" transform="rotate(-15 1581 487)"/><ellipse cx="1258" cy="622" rx="50" ry="28" fill="#3a2007" opacity=".4" filter="url(#blur4)"/><ellipse cx="1258" cy="630" rx="46" ry="24" fill="#4d2f0f" filter="url(#blur2)"/><ellipse cx="1262" cy="612" rx="36" ry="7" fill="#624017" opacity=".8" filter="url(#blur4)"/><ellipse cx="1186" cy="594" rx="28" ry="22" fill="#52330f" opacity=".7" filter="url(#blur4)"/><ellipse cx="1245.5" cy="347" rx="14" ry="11.5" fill="#3b2108" opacity=".55" filter="url(#blur2)"/><ellipse cx="1245.5" cy="344.5" rx="11.5" ry="8.5" fill="#553511" opacity=".95" filter="url(#blur2)"/><ellipse cx="1246" cy="341.5" rx="7" ry="4" fill="#65421a" opacity=".75" filter="url(#blur2)"/><ellipse cx="1183.5" cy="325" rx="6" ry="9" fill="#3b2108" opacity=".5" filter="url(#blur2)"/><ellipse cx="1184" cy="323" rx="3.5" ry="5" fill="#5d3b15" opacity=".8" filter="url(#blur2)"/><path d="M1176,369.3 L1203.3,371.7 L1186,389Z" fill="#43260b" stroke="#382007" stroke-width="1.6" opacity=".75" filter="url(#blur2)" stroke-linejoin="round"/><path d="M1176,379 Q1180,398 1199.6,409 Q1217,416.5 1232,412.5" stroke="#351d06" stroke-width="1.8" fill="none" opacity=".6" filter="url(#blur2)"/><path d="M1186,389 L1199,409" stroke="#351d06" stroke-width="1.2" fill="none" opacity=".35"/></g><path d="M1413.4,154.1C1413.3,154.7 1413.2,160.2 1411.8,165.1C1410.3,170.1 1407.8,176.8 1404.7,183.9C1401.6,190.9 1397.3,199.5 1393.0,207.3C1388.7,215.1 1383.3,223.7 1379.0,230.7C1374.7,237.7 1370.8,243.9 1367.3,249.4C1363.8,254.9 1361.0,259.9 1357.9,263.5C1354.8,267.0 1350.5,270.2 1348.5,270.5C1346.6,270.8 1344.6,267.5 1346.2,265.3C1347.8,263.2 1354.0,261.0 1357.9,257.6C1361.8,254.2 1365.7,250.0 1369.6,244.7C1373.5,239.5 1377.4,232.6 1381.3,226.0C1385.2,219.4 1389.5,211.9 1393.0,204.9C1396.5,197.9 1400.2,189.7 1402.4,183.9C1404.5,178.0 1405.1,172.9 1405.9,169.8C1406.7,166.7 1406.0,166.5 1407.1,165.1C1408.1,163.8 1411.2,163.4 1412.2,161.6C1413.3,159.8 1413.5,153.5 1413.4,154.1Z" fill="#c4a5a2"/><path d="M1333.3,193.2C1334.0,189.4 1334.7,187.6 1338.0,184.3C1341.3,181.0 1347.9,176.9 1353.2,173.3C1358.5,169.7 1364.1,166.1 1369.6,162.8C1375.1,159.5 1380.5,155.7 1386.0,153.4C1391.5,151.2 1397.8,149.1 1402.4,149.2C1407.0,149.3 1411.8,152.0 1413.4,154.1C1415.0,156.2 1413.3,159.8 1412.2,161.6C1411.2,163.4 1408.9,164.9 1407.1,165.1C1405.2,165.3 1403.6,162.0 1401.2,162.8C1398.9,163.6 1396.7,165.7 1393.0,169.8C1389.3,173.9 1384.0,181.3 1379.0,187.4C1373.9,193.4 1367.5,200.6 1362.6,206.1C1357.7,211.6 1353.4,217.2 1349.7,220.1C1346.0,223.1 1342.7,224.0 1340.3,223.7C1338.0,223.3 1336.7,220.5 1335.7,217.8C1334.6,215.1 1334.4,211.4 1334.0,207.3C1333.6,203.2 1332.7,197.0 1333.3,193.2Z" fill="url(#whiteg)"/><path d="M1401.2,163.9C1403.4,163.8 1405.7,166.5 1405.9,169.8C1406.1,173.1 1404.5,178.0 1402.4,183.9C1400.2,189.7 1396.5,197.9 1393.0,204.9C1389.5,211.9 1385.2,219.4 1381.3,226.0C1377.4,232.6 1373.5,239.5 1369.6,244.7C1365.7,250.0 1361.8,254.2 1357.9,257.6C1354.0,261.0 1349.3,264.2 1346.2,265.3C1343.1,266.5 1340.6,266.1 1339.2,264.6C1337.7,263.1 1337.3,260.1 1337.5,256.4C1337.7,252.7 1338.5,247.5 1340.3,242.4C1342.2,237.3 1344.8,231.8 1348.5,226.0C1352.2,220.1 1357.5,213.5 1362.6,207.3C1367.7,201.0 1373.9,194.6 1379.0,188.5C1384.0,182.5 1389.3,175.1 1393.0,171.0C1396.7,166.9 1399.1,164.1 1401.2,163.9Z" fill="url(#pinkg)"/><path d="M1345,225 Q1370,195 1392,175 Q1380,215 1350,255 Q1340,250 1345,225Z" fill="#7f4f4c" opacity=".55" filter="url(#blur2)"/><ellipse cx="1374" cy="650.5" rx="2" ry="1.5" fill="#3b2208"/><ellipse cx="1413" cy="651.5" rx="7" ry="2.5" fill="#3b2208"/><ellipse cx="1409" cy="650" rx="2.5" ry="2" fill="#3b2208"/><ellipse cx="1417" cy="650" rx="2.5" ry="2" fill="#3b2208"/><path d="M1170.2,138.7C1173.4,137.8 1180.4,141.0 1185.6,143.4C1190.7,145.8 1196.0,149.2 1201.0,153.0C1206.0,156.9 1211.2,161.7 1215.7,166.5C1220.2,171.3 1224.1,175.8 1228.0,182.0C1232.0,188.1 1235.8,195.5 1239.6,203.2C1243.5,210.9 1247.5,219.6 1251.2,228.3C1254.9,236.9 1259.9,250.3 1262.0,255.3C1264.0,260.2 1261.8,257.0 1263.5,258.0C1265.3,258.9 1269.5,260.7 1272.4,261.1C1275.4,261.4 1277.7,263.5 1281.3,260.3C1284.8,257.1 1289.0,248.7 1293.6,241.8C1298.3,234.8 1303.9,226.0 1309.1,218.6C1314.2,211.2 1319.7,203.2 1324.5,197.4C1329.3,191.6 1332.2,189.0 1338.0,183.9C1343.8,178.7 1351.2,171.7 1359.2,166.5C1367.3,161.4 1378.5,155.9 1386.2,153.0C1394.0,150.1 1400.8,149.0 1405.5,149.2C1410.2,149.4 1413.8,150.3 1414.4,154.2C1415.0,158.0 1412.2,164.8 1409.4,172.3C1406.6,179.8 1401.7,191.0 1397.8,199.3C1394.0,207.7 1390.1,215.4 1386.2,222.5C1382.4,229.5 1378.5,236.0 1374.7,241.8C1370.8,247.6 1366.9,252.4 1363.1,257.2C1359.2,262.0 1355.4,265.9 1351.5,270.7C1347.6,275.5 1340.6,280.0 1339.9,286.1C1339.3,292.2 1344.8,300.0 1347.6,307.4C1350.5,314.8 1354.7,322.5 1357.3,330.5C1359.9,338.5 1361.9,348.3 1363.1,355.6C1364.3,362.8 1364.8,368.6 1364.5,374.0C1364.3,379.4 1363.9,383.3 1361.7,388.0C1359.6,392.6 1349.4,401.0 1351.7,402.0C1354.1,403.0 1366.4,396.3 1375.7,394.0C1385.0,391.6 1397.0,389.2 1407.7,388.0C1418.3,386.8 1436.3,387.0 1439.6,386.8C1443.0,386.6 1425.5,386.4 1428.0,386.8C1430.5,387.1 1446.1,387.2 1454.7,388.8C1463.4,390.3 1471.1,392.4 1479.9,396.0C1488.8,399.5 1498.6,404.6 1507.9,410.0C1517.2,415.3 1528.2,422.6 1535.8,427.9C1543.5,433.3 1548.8,438.3 1553.8,441.9C1558.8,445.6 1561.8,446.9 1565.8,449.9C1569.8,452.9 1574.5,456.6 1577.8,459.9C1581.1,463.2 1583.7,466.4 1585.8,469.9C1587.9,473.4 1589.7,477.1 1590.6,481.1C1591.5,485.1 1591.5,489.7 1591.0,493.9C1590.5,498.0 1589.2,502.2 1587.8,505.8C1586.4,509.5 1582.6,512.2 1582.6,515.8C1582.6,519.5 1586.5,523.8 1587.8,527.8C1589.1,531.8 1589.7,535.5 1590.2,539.8C1590.7,544.1 1591.4,548.8 1591.0,553.8C1590.6,558.8 1589.7,564.4 1587.8,569.8C1585.9,575.1 1583.1,581.1 1579.8,585.8C1576.5,590.4 1573.1,594.4 1567.8,597.7C1562.5,601.1 1555.8,602.9 1547.8,605.7C1539.8,608.5 1529.2,612.0 1519.9,614.5C1510.5,617.1 1499.9,619.6 1491.9,620.9C1483.9,622.3 1478.6,622.9 1471.9,622.5C1465.3,622.1 1458.8,620.9 1451.9,618.5C1445.1,616.2 1439.5,609.0 1430.8,608.5C1422.1,608.1 1409.5,613.7 1399.7,615.7C1389.8,617.8 1382.4,619.4 1371.7,620.9C1361.1,622.5 1346.4,623.8 1335.8,624.9C1325.1,626.0 1314.1,624.9 1307.8,627.7C1301.5,630.5 1302.5,638.0 1297.8,641.7C1293.1,645.4 1286.1,647.8 1279.8,649.7C1273.5,651.6 1266.5,652.7 1259.8,652.9C1253.2,653.1 1246.5,652.4 1239.9,650.9C1233.2,649.4 1224.9,647.2 1219.9,643.7C1214.9,640.2 1212.0,634.5 1209.9,629.7C1207.8,624.9 1210.1,616.9 1207.1,614.9C1204.1,612.9 1197.1,617.4 1191.9,617.7C1186.7,618.1 1181.3,618.3 1175.9,616.9C1170.6,615.6 1163.6,612.9 1160.0,609.7C1156.3,606.5 1155.0,601.7 1154.0,597.7C1153.0,593.7 1153.0,589.8 1154.0,585.8C1155.0,581.8 1157.3,577.8 1160.0,573.8C1162.6,569.8 1167.9,567.8 1169.9,561.8C1171.9,555.8 1171.1,547.1 1171.9,537.8C1172.8,528.5 1173.8,515.8 1175.1,505.8C1176.5,495.9 1177.8,486.5 1179.9,477.9C1182.1,469.2 1184.8,461.9 1187.9,453.9C1191.1,445.9 1199.0,434.9 1198.7,429.9C1198.4,424.9 1190.4,427.3 1185.9,423.9C1181.5,420.6 1176.3,415.3 1171.9,410.0C1167.6,404.6 1162.5,398.3 1160.0,392.0C1157.4,385.6 1157.0,377.1 1156.8,372.0C1156.5,366.9 1156.9,367.0 1158.6,361.4C1160.3,355.7 1164.5,345.9 1167.1,338.2C1169.6,330.5 1170.9,322.8 1174.0,315.1C1177.1,307.4 1180.9,298.8 1185.6,291.9C1190.3,285.0 1201.5,282.1 1202.2,273.8C1202.8,265.4 1193.5,252.2 1189.5,241.8C1185.4,231.3 1181.1,220.5 1177.9,210.9C1174.7,201.2 1172.1,191.6 1170.2,183.9C1168.2,176.2 1166.9,170.4 1166.3,164.6C1165.7,158.8 1165.7,153.5 1166.3,149.2C1166.9,144.9 1166.9,139.7 1170.2,138.7Z" fill="none" stroke="#1fa9ea" stroke-width="1.1"/><path d="M1333.3,193.2C1334.0,189.4 1334.7,187.6 1338.0,184.3C1341.3,181.0 1347.9,176.9 1353.2,173.3C1358.5,169.7 1364.1,166.1 1369.6,162.8C1375.1,159.5 1380.5,155.7 1386.0,153.4C1391.5,151.2 1397.8,149.1 1402.4,149.2C1407.0,149.3 1411.8,152.0 1413.4,154.1C1415.0,156.2 1413.3,159.8 1412.2,161.6C1411.2,163.4 1408.9,164.9 1407.1,165.1C1405.2,165.3 1403.6,162.0 1401.2,162.8C1398.9,163.6 1396.7,165.7 1393.0,169.8C1389.3,173.9 1384.0,181.3 1379.0,187.4C1373.9,193.4 1367.5,200.6 1362.6,206.1C1357.7,211.6 1353.4,217.2 1349.7,220.1C1346.0,223.1 1342.7,224.0 1340.3,223.7C1338.0,223.3 1336.7,220.5 1335.7,217.8C1334.6,215.1 1334.4,211.4 1334.0,207.3C1333.6,203.2 1332.7,197.0 1333.3,193.2Z" fill="none" stroke="#1fa9ea" stroke-width="1"/><path d="M1401.2,163.9C1403.4,163.8 1405.7,166.5 1405.9,169.8C1406.1,173.1 1404.5,178.0 1402.4,183.9C1400.2,189.7 1396.5,197.9 1393.0,204.9C1389.5,211.9 1385.2,219.4 1381.3,226.0C1377.4,232.6 1373.5,239.5 1369.6,244.7C1365.7,250.0 1361.8,254.2 1357.9,257.6C1354.0,261.0 1349.3,264.2 1346.2,265.3C1343.1,266.5 1340.6,266.1 1339.2,264.6C1337.7,263.1 1337.3,260.1 1337.5,256.4C1337.7,252.7 1338.5,247.5 1340.3,242.4C1342.2,237.3 1344.8,231.8 1348.5,226.0C1352.2,220.1 1357.5,213.5 1362.6,207.3C1367.7,201.0 1373.9,194.6 1379.0,188.5C1384.0,182.5 1389.3,175.1 1393.0,171.0C1396.7,166.9 1399.1,164.1 1401.2,163.9Z" fill="none" stroke="#1fa9ea" stroke-width="1"/><path d="M1339.2,286.5C1337.4,288.4 1332.0,294.7 1328.4,297.7C1324.8,300.7 1322.1,302.7 1317.6,304.7C1313.1,306.6 1306.2,307.9 1301.3,309.3C1296.5,310.7 1288.6,310.9 1288.6,313.1C1288.6,315.4 1297.9,319.3 1301.3,322.8C1304.8,326.3 1307.7,329.9 1309.1,334.4C1310.5,338.9 1310.2,343.4 1309.8,349.8C1309.5,356.2 1307.6,369.3 1307.1,373.0C1306.7,376.7 1307.5,369.2 1307.0,372.0C1306.4,374.8 1303.3,384.7 1303.8,390.0C1304.3,395.3 1306.5,400.4 1309.8,404.0C1313.1,407.5 1318.8,410.2 1323.8,411.2C1328.8,412.2 1335.1,411.5 1339.8,410.0C1344.4,408.4 1349.7,403.3 1351.7,402.0" fill="none" stroke="#1fa9ea" stroke-width="1"/><path d="M1326.4,195.5C1325.1,198.7 1321.0,208.8 1318.7,214.8C1316.5,220.7 1313.2,225.6 1312.9,231.3C1312.6,237.1 1314.5,241.6 1316.8,249.5C1319.0,257.4 1323.2,273.9 1326.4,278.8C1329.6,283.7 1332.2,280.0 1336.1,278.8C1339.9,277.6 1345.1,275.1 1349.6,271.5C1354.1,267.9 1358.9,262.5 1363.1,257.2C1367.3,251.9 1372.7,242.7 1374.7,239.8" fill="none" stroke="#1fa9ea" stroke-width="1"/><path d="M1333.0,193.5C1333.2,197.4 1333.6,208.3 1334.1,216.7C1334.7,225.0 1335.2,235.7 1336.1,243.7C1336.9,251.7 1336.6,261.7 1339.2,264.9C1341.7,268.1 1348.2,265.0 1351.5,263.0C1354.9,260.9 1356.7,255.1 1359.2,252.6C1361.8,250.0 1364.4,249.7 1366.9,247.6C1369.5,245.4 1373.4,241.1 1374.7,239.8" fill="none" stroke="#1fa9ea" stroke-width="1"/><path d="M1312.9,231.3C1314.2,235.0 1317.7,247.1 1320.6,253.3C1323.5,259.6 1327.7,264.5 1330.3,268.8C1332.9,273.0 1335.1,277.1 1336.1,278.8" fill="none" stroke="#1fa9ea" stroke-width="1"/><rect x="1168.0" y="136.5" width="4.4" height="4.4" fill="#1fa9ea"/><rect x="1213.5" y="164.3" width="4.4" height="4.4" fill="#1fa9ea"/><rect x="1168.0" y="181.7" width="4.4" height="4.4" fill="#1fa9ea"/><rect x="1261.3" y="255.8" width="4.4" height="4.4" fill="#1fa9ea"/><rect x="1279.1" y="258.1" width="4.4" height="4.4" fill="#1fa9ea"/><rect x="1200.0" y="271.6" width="4.4" height="4.4" fill="#1fa9ea"/><rect x="1165.3" y="336.0" width="4.4" height="4.4" fill="#1fa9ea"/><rect x="1384.0" y="150.8" width="4.4" height="4.4" fill="#1fa9ea"/><rect x="1412.2" y="152.0" width="4.4" height="4.4" fill="#1fa9ea"/><rect x="1399.5" y="162.4" width="4.4" height="4.4" fill="#1fa9ea"/><rect x="1335.8" y="181.7" width="4.4" height="4.4" fill="#1fa9ea"/><rect x="1324.2" y="193.3" width="4.4" height="4.4" fill="#1fa9ea"/><rect x="1330.8" y="191.3" width="4.4" height="4.4" fill="#1fa9ea"/><rect x="1380.2" y="196.3" width="4.4" height="4.4" fill="#1fa9ea"/><rect x="1331.9" y="214.5" width="4.4" height="4.4" fill="#1fa9ea"/><rect x="1345.4" y="215.3" width="4.4" height="4.4" fill="#1fa9ea"/><rect x="1310.7" y="229.1" width="4.4" height="4.4" fill="#1fa9ea"/><rect x="1333.9" y="241.5" width="4.4" height="4.4" fill="#1fa9ea"/><rect x="1372.5" y="237.6" width="4.4" height="4.4" fill="#1fa9ea"/><rect x="1364.7" y="245.4" width="4.4" height="4.4" fill="#1fa9ea"/><rect x="1357.0" y="250.4" width="4.4" height="4.4" fill="#1fa9ea"/><rect x="1349.3" y="260.8" width="4.4" height="4.4" fill="#1fa9ea"/><rect x="1356.3" y="260.8" width="4.4" height="4.4" fill="#1fa9ea"/><rect x="1337.0" y="262.7" width="4.4" height="4.4" fill="#1fa9ea"/><rect x="1324.2" y="276.6" width="4.4" height="4.4" fill="#1fa9ea"/><rect x="1333.9" y="276.6" width="4.4" height="4.4" fill="#1fa9ea"/><rect x="1347.4" y="269.3" width="4.4" height="4.4" fill="#1fa9ea"/><rect x="1315.4" y="302.5" width="4.4" height="4.4" fill="#1fa9ea"/><rect x="1286.4" y="310.9" width="4.4" height="4.4" fill="#1fa9ea"/><rect x="1360.9" y="353.4" width="4.4" height="4.4" fill="#1fa9ea"/><rect x="1304.9" y="370.8" width="4.4" height="4.4" fill="#1fa9ea"/><rect x="1157.8" y="389.8" width="4.4" height="4.4" fill="#1fa9ea"/><rect x="1196.5" y="427.7" width="4.4" height="4.4" fill="#1fa9ea"/><rect x="1177.7" y="475.7" width="4.4" height="4.4" fill="#1fa9ea"/><rect x="1167.7" y="559.6" width="4.4" height="4.4" fill="#1fa9ea"/><rect x="1151.8" y="593.5" width="4.4" height="4.4" fill="#1fa9ea"/><rect x="1204.9" y="612.7" width="4.4" height="4.4" fill="#1fa9ea"/><rect x="1244.1" y="648.7" width="4.4" height="4.4" fill="#1fa9ea"/><rect x="1306.8" y="625.5" width="4.4" height="4.4" fill="#1fa9ea"/><rect x="1369.5" y="618.7" width="4.4" height="4.4" fill="#1fa9ea"/><rect x="1427.5" y="606.3" width="4.4" height="4.4" fill="#1fa9ea"/><rect x="1469.4" y="619.5" width="4.4" height="4.4" fill="#1fa9ea"/><rect x="1304.8" y="369.8" width="4.4" height="4.4" fill="#1fa9ea"/><rect x="1337.6" y="407.8" width="4.4" height="4.4" fill="#1fa9ea"/><rect x="1349.5" y="399.8" width="4.4" height="4.4" fill="#1fa9ea"/><rect x="1452.6" y="385.8" width="4.4" height="4.4" fill="#1fa9ea"/><rect x="1452.5" y="386.6" width="4.4" height="4.4" fill="#1fa9ea"/><rect x="1563.6" y="447.7" width="4.4" height="4.4" fill="#1fa9ea"/><rect x="1588.4" y="478.9" width="4.4" height="4.4" fill="#1fa9ea"/><rect x="1580.4" y="513.6" width="4.4" height="4.4" fill="#1fa9ea"/><rect x="1587.2" y="537.6" width="4.4" height="4.4" fill="#1fa9ea"/><rect x="1565.6" y="595.5" width="4.4" height="4.4" fill="#1fa9ea"/><rect x="1469.7" y="620.3" width="4.4" height="4.4" fill="#1fa9ea"/><rect x="1428.6" y="606.3" width="4.4" height="4.4" fill="#1fa9ea"/><rect x="1165.5" y="335.0" width="4.4" height="4.4" fill="#1fa9ea"/><rect x="1159.1" y="390.5" width="4.4" height="4.4" fill="#1fa9ea"/><rect x="1196.3" y="428.2" width="4.4" height="4.4" fill="#1fa9ea"/><rect x="1177.9" y="475.3" width="4.4" height="4.4" fill="#1fa9ea"/><rect x="1167.0" y="559.1" width="4.4" height="4.4" fill="#1fa9ea"/><rect x="1151.6" y="592.8" width="4.4" height="4.4" fill="#1fa9ea"/><rect x="1205.2" y="612.7" width="4.4" height="4.4" fill="#1fa9ea"/><rect x="1244.9" y="648.4" width="4.4" height="4.4" fill="#1fa9ea"/><path d="M1190.6,99.0L1306.4,359.4L1444.1,311.2M1316.8,259.1L1380.4,184.7" stroke="#111" stroke-width="1" fill="none"/><circle cx="1306.4" cy="359.4" r="3.3" fill="none" stroke="#111" stroke-width="3.4"/><circle cx="1306.4" cy="359.4" r="3.3" fill="none" stroke="#fff" stroke-width="1.7"/><circle cx="1316.8" cy="259.1" r="3.3" fill="none" stroke="#111" stroke-width="3.4"/><circle cx="1316.8" cy="259.1" r="3.3" fill="none" stroke="#fff" stroke-width="1.7"/><rect x="1440.5" y="307.6" width="7.2" height="7.2" fill="#111" stroke="#fff" stroke-width="1.3"/><rect x="1376.8" y="181.1" width="7.2" height="7.2" fill="#111" stroke="#fff" stroke-width="1.3"/><rect x="1335.6" y="282.9" width="7.2" height="7.2" fill="#111" stroke="#fff" stroke-width="1.3"/></svg>
<div style="left:781px;top:79px;width:1067px;height:20.5px;background:#f3f3f3;border-top:1px solid #2a2a2a;border-bottom:1.5px solid #1e1e1e;"></div>
<div style="left:781px;top:99px;width:19.2px;height:554px;background:#f3f3f3;border-right:1.5px solid #1e1e1e;"></div>
<div style="left:781px;top:79px;width:19.5px;height:20.5px;background:#f3f3f3;border-top:1px solid #2a2a2a;border-right:1px solid #1e1e1e;border-bottom:1px solid #1e1e1e;"></div>
<div style="left:785.3px;top:79px;width:1px;height:21px;background:#333;"></div>
<div style="left:781px;top:84.3px;width:19.5px;height:1px;background:#333;"></div>
<span class="t" style="left:848.37px;top:76.40px;font-size:7.6px;font-weight:700;color:#3b3b4a;letter-spacing:0.524px;">50</span>
<span class="t" style="left:897.10px;top:76.40px;font-size:7.6px;font-weight:700;color:#3b3b4a;">0</span>
<span class="t" style="left:945.83px;top:76.40px;font-size:7.6px;font-weight:700;color:#3b3b4a;letter-spacing:0.524px;">50</span>
<span class="t" style="left:994.56px;top:76.40px;font-size:7.6px;font-weight:700;color:#3b3b4a;letter-spacing:0.524px;">100</span>
<span class="t" style="left:1043.29px;top:76.40px;font-size:7.6px;font-weight:700;color:#3b3b4a;letter-spacing:0.524px;">150</span>
<span class="t" style="left:1092.02px;top:76.40px;font-size:7.6px;font-weight:700;color:#3b3b4a;letter-spacing:0.524px;">200</span>
<span class="t" style="left:1140.75px;top:76.40px;font-size:7.6px;font-weight:700;color:#3b3b4a;letter-spacing:0.524px;">250</span>
<span class="t" style="left:1189.48px;top:76.40px;font-size:7.6px;font-weight:700;color:#3b3b4a;letter-spacing:0.524px;">300</span>
<span class="t" style="left:1238.21px;top:76.40px;font-size:7.6px;font-weight:700;color:#3b3b4a;letter-spacing:0.524px;">350</span>
<span class="t" style="left:1286.94px;top:76.40px;font-size:7.6px;font-weight:700;color:#3b3b4a;letter-spacing:0.524px;">400</span>
<span class="t" style="left:1335.67px;top:76.40px;font-size:7.6px;font-weight:700;color:#3b3b4a;letter-spacing:0.524px;">450</span>
<span class="t" style="left:1384.40px;top:76.40px;font-size:7.6px;font-weight:700;color:#3b3b4a;letter-spacing:0.524px;">500</span>
<span class="t" style="left:1433.13px;top:76.40px;font-size:7.6px;font-weight:700;color:#3b3b4a;letter-spacing:0.524px;">550</span>
<span class="t" style="left:1481.86px;top:76.40px;font-size:7.6px;font-weight:700;color:#3b3b4a;letter-spacing:0.524px;">600</span>
<span class="t" style="left:1530.59px;top:76.40px;font-size:7.6px;font-weight:700;color:#3b3b4a;letter-spacing:0.524px;">650</span>
<span class="t" style="left:1579.32px;top:76.40px;font-size:7.6px;font-weight:700;color:#3b3b4a;letter-spacing:0.524px;">700</span>
<span class="t" style="left:1628.05px;top:76.40px;font-size:7.6px;font-weight:700;color:#3b3b4a;letter-spacing:0.524px;">750</span>
<span class="t" style="left:1676.78px;top:76.40px;font-size:7.6px;font-weight:700;color:#3b3b4a;letter-spacing:0.524px;">800</span>
<span class="t" style="left:1725.51px;top:76.40px;font-size:7.6px;font-weight:700;color:#3b3b4a;letter-spacing:0.524px;">850</span>
<span class="t" style="left:1774.24px;top:76.40px;font-size:7.6px;font-weight:700;color:#3b3b4a;letter-spacing:0.524px;">900</span>
<span class="t" style="left:1822.97px;top:76.40px;font-size:7.6px;font-weight:700;color:#3b3b4a;letter-spacing:0.524px;">950</span>
<span class="t" style="left:801.60px;top:76.40px;font-size:7.6px;font-weight:700;color:#3b3b4a;letter-spacing:0.507px;">100</span>
<svg style="left:0;top:0" width="2840" height="120"><rect x="807.24" y="93" width="1.1" height="6" fill="#1c1c1c"/><rect x="816.98" y="93" width="1.1" height="6" fill="#1c1c1c"/><rect x="826.73" y="93" width="1.1" height="6" fill="#1c1c1c"/><rect x="836.47" y="93" width="1.1" height="6" fill="#1c1c1c"/><rect x="846.17" y="79" width="1.2" height="20" fill="#1c1c1c"/><rect x="855.97" y="93" width="1.1" height="6" fill="#1c1c1c"/><rect x="865.71" y="93" width="1.1" height="6" fill="#1c1c1c"/><rect x="875.46" y="93" width="1.1" height="6" fill="#1c1c1c"/><rect x="885.20" y="93" width="1.1" height="6" fill="#1c1c1c"/><rect x="894.90" y="79" width="1.2" height="20" fill="#1c1c1c"/><rect x="904.70" y="93" width="1.1" height="6" fill="#1c1c1c"/><rect x="914.44" y="93" width="1.1" height="6" fill="#1c1c1c"/><rect x="924.19" y="93" width="1.1" height="6" fill="#1c1c1c"/><rect x="933.93" y="93" width="1.1" height="6" fill="#1c1c1c"/><rect x="943.63" y="79" width="1.2" height="20" fill="#1c1c1c"/><rect x="953.43" y="93" width="1.1" height="6" fill="#1c1c1c"/><rect x="963.17" y="93" width="1.1" height="6" fill="#1c1c1c"/><rect x="972.92" y="93" width="1.1" height="6" fill="#1c1c1c"/><rect x="982.66" y="93" width="1.1" height="6" fill="#1c1c1c"/><rect x="992.36" y="79" width="1.2" height="20" fill="#1c1c1c"/><rect x="1002.16" y="93" width="1.1" height="6" fill="#1c1c1c"/><rect x="1011.90" y="93" width="1.1" height="6" fill="#1c1c1c"/><rect x="1021.65" y="93" width="1.1" height="6" fill="#1c1c1c"/><rect x="1031.39" y="93" width="1.1" height="6" fill="#1c1c1c"/><rect x="1041.09" y="79" width="1.2" height="20" fill="#1c1c1c"/><rect x="1050.89" y="93" width="1.1" height="6" fill="#1c1c1c"/><rect x="1060.63" y="93" width="1.1" height="6" fill="#1c1c1c"/><rect x="1070.38" y="93" width="1.1" height="6" fill="#1c1c1c"/><rect x="1080.12" y="93" width="1.1" height="6" fill="#1c1c1c"/><rect x="1089.82" y="79" width="1.2" height="20" fill="#1c1c1c"/><rect x="1099.62" y="93" width="1.1" height="6" fill="#1c1c1c"/><rect x="1109.36" y="93" width="1.1" height="6" fill="#1c1c1c"/><rect x="1119.11" y="93" width="1.1" height="6" fill="#1c1c1c"/><rect x="1128.85" y="93" width="1.1" height="6" fill="#1c1c1c"/><rect x="1138.55" y="79" width="1.2" height="20" fill="#1c1c1c"/><rect x="1148.35" y="93" width="1.1" height="6" fill="#1c1c1c"/><rect x="1158.09" y="93" width="1.1" height="6" fill="#1c1c1c"/><rect x="1167.84" y="93" width="1.1" height="6" fill="#1c1c1c"/><rect x="1177.58" y="93" width="1.1" height="6" fill="#1c1c1c"/><rect x="1187.28" y="79" width="1.2" height="20" fill="#1c1c1c"/><rect x="1197.08" y="93" width="1.1" height="6" fill="#1c1c1c"/><rect x="1206.82" y="93" width="1.1" height="6" fill="#1c1c1c"/><rect x="1216.57" y="93" width="1.1" height="6" fill="#1c1c1c"/><rect x="1226.31" y="93" width="1.1" height="6" fill="#1c1c1c"/><rect x="1236.01" y="79" width="1.2" height="20" fill="#1c1c1c"/><rect x="1245.81" y="93" width="1.1" height="6" fill="#1c1c1c"/><rect x="1255.55" y="93" width="1.1" height="6" fill="#1c1c1c"/><rect x="1265.30" y="93" width="1.1" height="6" fill="#1c1c1c"/><rect x="1275.04" y="93" width="1.1" height="6" fill="#1c1c1c"/><rect x="1284.74" y="79" width="1.2" height="20" fill="#1c1c1c"/><rect x="1294.54" y="93" width="1.1" height="6" fill="#1c1c1c"/><rect x="1304.28" y="93" width="1.1" height="6" fill="#1c1c1c"/><rect x="1314.03" y="93" width="1.1" height="6" fill="#1c1c1c"/><rect x="1323.77" y="93" width="1.1" height="6" fill="#1c1c1c"/><rect x="1333.47" y="79" width="1.2" height="20" fill="#1c1c1c"/><rect x="1343.27" y="93" width="1.1" height="6" fill="#1c1c1c"/><rect x="1353.01" y="93" width="1.1" height="6" fill="#1c1c1c"/><rect x="1362.76" y="93" width="1.1" height="6" fill="#1c1c1c"/><rect x="1372.50" y="93" width="1.1" height="6" fill="#1c1c1c"/><rect x="1382.20" y="79" width="1.2" height="20" fill="#1c1c1c"/><rect x="1392.00" y="93" width="1.1" height="6" fill="#1c1c1c"/><rect x="1401.74" y="93" width="1.1" height="6" fill="#1c1c1c"/><rect x="1411.49" y="93" width="1.1" height="6" fill="#1c1c1c"/><rect x="1421.23" y="93" width="1.1" height="6" fill="#1c1c1c"/><rect x="1430.93" y="79" width="1.2" height="20" fill="#1c1c1c"/><rect x="1440.73" y="93" width="1.1" height="6" fill="#1c1c1c"/><rect x="1450.47" y="93" width="1.1" height="6" fill="#1c1c1c"/><rect x="1460.22" y="93" width="1.1" height="6" fill="#1c1c1c"/><rect x="1469.96" y="93" width="1.1" height="6" fill="#1c1c1c"/><rect x="1479.66" y="79" width="1.2" height="20" fill="#1c1c1c"/><rect x="1489.46" y="93" width="1.1" height="6" fill="#1c1c1c"/><rect x="1499.20" y="93" width="1.1" height="6" fill="#1c1c1c"/><rect x="1508.95" y="93" width="1.1" height="6" fill="#1c1c1c"/><rect x="1518.69" y="93" width="1.1" height="6" fill="#1c1c1c"/><rect x="1528.39" y="79" width="1.2" height="20" fill="#1c1c1c"/><rect x="1538.19" y="93" width="1.1" height="6" fill="#1c1c1c"/><rect x="1547.93" y="93" width="1.1" height="6" fill="#1c1c1c"/><rect x="1557.68" y="93" width="1.1" height="6" fill="#1c1c1c"/><rect x="1567.42" y="93" width="1.1" height="6" fill="#1c1c1c"/><rect x="1577.12" y="79" width="1.2" height="20" fill="#1c1c1c"/><rect x="1586.92" y="93" width="1.1" height="6" fill="#1c1c1c"/><rect x="1596.66" y="93" width="1.1" height="6" fill="#1c1c1c"/><rect x="1606.41" y="93" width="1.1" height="6" fill="#1c1c1c"/><rect x="1616.15" y="93" width="1.1" height="6" fill="#1c1c1c"/><rect x="1625.85" y="79" width="1.2" height="20" fill="#1c1c1c"/><rect x="1635.65" y="93" width="1.1" height="6" fill="#1c1c1c"/><rect x="1645.39" y="93" width="1.1" height="6" fill="#1c1c1c"/><rect x="1655.14" y="93" width="1.1" height="6" fill="#1c1c1c"/><rect x="1664.88" y="93" width="1.1" height="6" fill="#1c1c1c"/><rect x="1674.58" y="79" width="1.2" height="20" fill="#1c1c1c"/><rect x="1684.38" y="93" width="1.1" height="6" fill="#1c1c1c"/><rect x="1694.12" y="93" width="1.1" height="6" fill="#1c1c1c"/><rect x="1703.87" y="93" width="1.1" height="6" fill="#1c1c1c"/><rect x="1713.61" y="93" width="1.1" height="6" fill="#1c1c1c"/><rect x="1723.31" y="79" width="1.2" height="20" fill="#1c1c1c"/><rect x="1733.11" y="93" width="1.1" height="6" fill="#1c1c1c"/><rect x="1742.85" y="93" width="1.1" height="6" fill="#1c1c1c"/><rect x="1752.60" y="93" width="1.1" height="6" fill="#1c1c1c"/><rect x="1762.34" y="93" width="1.1" height="6" fill="#1c1c1c"/><rect x="1772.04" y="79" width="1.2" height="20" fill="#1c1c1c"/><rect x="1781.84" y="93" width="1.1" height="6" fill="#1c1c1c"/><rect x="1791.58" y="93" width="1.1" height="6" fill="#1c1c1c"/><rect x="1801.33" y="93" width="1.1" height="6" fill="#1c1c1c"/><rect x="1811.07" y="93" width="1.1" height="6" fill="#1c1c1c"/><rect x="1820.77" y="79" width="1.2" height="20" fill="#1c1c1c"/></svg>
<span class="t" style="left:783px;top:130.7px;font-size:7.6px;font-weight:400;line-height:7px;height:7px;color:#111;-webkit-text-stroke:.2px;">1</span>
<span class="t" style="left:783px;top:137.7px;font-size:7.6px;font-weight:400;line-height:7px;height:7px;color:#111;-webkit-text-stroke:.2px;">5</span>
<span class="t" style="left:783px;top:144.7px;font-size:7.6px;font-weight:400;line-height:7px;height:7px;color:#111;-webkit-text-stroke:.2px;">0</span>
<span class="t" style="left:783px;top:180.4px;font-size:7.6px;font-weight:400;line-height:7px;height:7px;color:#111;-webkit-text-stroke:.2px;">2</span>
<span class="t" style="left:783px;top:187.4px;font-size:7.6px;font-weight:400;line-height:7px;height:7px;color:#111;-webkit-text-stroke:.2px;">0</span>
<span class="t" style="left:783px;top:194.4px;font-size:7.6px;font-weight:400;line-height:7px;height:7px;color:#111;-webkit-text-stroke:.2px;">0</span>
<span class="t" style="left:783px;top:230.2px;font-size:7.6px;font-weight:400;line-height:7px;height:7px;color:#111;-webkit-text-stroke:.2px;">2</span>
<span class="t" style="left:783px;top:237.2px;font-size:7.6px;font-weight:400;line-height:7px;height:7px;color:#111;-webkit-text-stroke:.2px;">5</span>
<span class="t" style="left:783px;top:244.2px;font-size:7.6px;font-weight:400;line-height:7px;height:7px;color:#111;-webkit-text-stroke:.2px;">0</span>
<span class="t" style="left:783px;top:279.9px;font-size:7.6px;font-weight:400;line-height:7px;height:7px;color:#111;-webkit-text-stroke:.2px;">3</span>
<span class="t" style="left:783px;top:286.9px;font-size:7.6px;font-weight:400;line-height:7px;height:7px;color:#111;-webkit-text-stroke:.2px;">0</span>
<span class="t" style="left:783px;top:293.9px;font-size:7.6px;font-weight:400;line-height:7px;height:7px;color:#111;-webkit-text-stroke:.2px;">0</span>
<span class="t" style="left:783px;top:329.6px;font-size:7.6px;font-weight:400;line-height:7px;height:7px;color:#111;-webkit-text-stroke:.2px;">3</span>
<span class="t" style="left:783px;top:336.6px;font-size:7.6px;font-weight:400;line-height:7px;height:7px;color:#111;-webkit-text-stroke:.2px;">5</span>
<span class="t" style="left:783px;top:343.6px;font-size:7.6px;font-weight:400;line-height:7px;height:7px;color:#111;-webkit-text-stroke:.2px;">0</span>
<span class="t" style="left:783px;top:379.3px;font-size:7.6px;font-weight:400;line-height:7px;height:7px;color:#111;-webkit-text-stroke:.2px;">4</span>
<span class="t" style="left:783px;top:386.3px;font-size:7.6px;font-weight:400;line-height:7px;height:7px;color:#111;-webkit-text-stroke:.2px;">0</span>
<span class="t" style="left:783px;top:393.3px;font-size:7.6px;font-weight:400;line-height:7px;height:7px;color:#111;-webkit-text-stroke:.2px;">0</span>
<span class="t" style="left:783px;top:429.1px;font-size:7.6px;font-weight:400;line-height:7px;height:7px;color:#111;-webkit-text-stroke:.2px;">4</span>
<span class="t" style="left:783px;top:436.1px;font-size:7.6px;font-weight:400;line-height:7px;height:7px;color:#111;-webkit-text-stroke:.2px;">5</span>
<span class="t" style="left:783px;top:443.1px;font-size:7.6px;font-weight:400;line-height:7px;height:7px;color:#111;-webkit-text-stroke:.2px;">0</span>
<span class="t" style="left:783px;top:478.8px;font-size:7.6px;font-weight:400;line-height:7px;height:7px;color:#111;-webkit-text-stroke:.2px;">5</span>
<span class="t" style="left:783px;top:485.8px;font-size:7.6px;font-weight:400;line-height:7px;height:7px;color:#111;-webkit-text-stroke:.2px;">0</span>
<span class="t" style="left:783px;top:492.8px;font-size:7.6px;font-weight:400;line-height:7px;height:7px;color:#111;-webkit-text-stroke:.2px;">0</span>
<span class="t" style="left:783px;top:528.5px;font-size:7.6px;font-weight:400;line-height:7px;height:7px;color:#111;-webkit-text-stroke:.2px;">5</span>
<span class="t" style="left:783px;top:535.5px;font-size:7.6px;font-weight:400;line-height:7px;height:7px;color:#111;-webkit-text-stroke:.2px;">5</span>
<span class="t" style="left:783px;top:542.5px;font-size:7.6px;font-weight:400;line-height:7px;height:7px;color:#111;-webkit-text-stroke:.2px;">0</span>
<span class="t" style="left:783px;top:578.3px;font-size:7.6px;font-weight:400;line-height:7px;height:7px;color:#111;-webkit-text-stroke:.2px;">6</span>
<span class="t" style="left:783px;top:585.3px;font-size:7.6px;font-weight:400;line-height:7px;height:7px;color:#111;-webkit-text-stroke:.2px;">0</span>
<span class="t" style="left:783px;top:592.3px;font-size:7.6px;font-weight:400;line-height:7px;height:7px;color:#111;-webkit-text-stroke:.2px;">0</span>
<svg style="left:0;top:0" width="2840" height="800"><rect x="793.5" y="108.95" width="6.5" height="1.1" fill="#1c1c1c"/><rect x="793.5" y="118.89" width="6.5" height="1.1" fill="#1c1c1c"/><rect x="781" y="128.79" width="19.5" height="1.2" fill="#1c1c1c"/><rect x="793.5" y="138.79" width="6.5" height="1.1" fill="#1c1c1c"/><rect x="793.5" y="148.73" width="6.5" height="1.1" fill="#1c1c1c"/><rect x="793.5" y="158.68" width="6.5" height="1.1" fill="#1c1c1c"/><rect x="793.5" y="168.62" width="6.5" height="1.1" fill="#1c1c1c"/><rect x="781" y="178.52" width="19.5" height="1.2" fill="#1c1c1c"/><rect x="793.5" y="188.52" width="6.5" height="1.1" fill="#1c1c1c"/><rect x="793.5" y="198.46" width="6.5" height="1.1" fill="#1c1c1c"/><rect x="793.5" y="208.41" width="6.5" height="1.1" fill="#1c1c1c"/><rect x="793.5" y="218.35" width="6.5" height="1.1" fill="#1c1c1c"/><rect x="781" y="228.25" width="19.5" height="1.2" fill="#1c1c1c"/><rect x="793.5" y="238.25" width="6.5" height="1.1" fill="#1c1c1c"/><rect x="793.5" y="248.19" width="6.5" height="1.1" fill="#1c1c1c"/><rect x="793.5" y="258.14" width="6.5" height="1.1" fill="#1c1c1c"/><rect x="793.5" y="268.08" width="6.5" height="1.1" fill="#1c1c1c"/><rect x="781" y="277.98" width="19.5" height="1.2" fill="#1c1c1c"/><rect x="793.5" y="287.98" width="6.5" height="1.1" fill="#1c1c1c"/><rect x="793.5" y="297.92" width="6.5" height="1.1" fill="#1c1c1c"/><rect x="793.5" y="307.87" width="6.5" height="1.1" fill="#1c1c1c"/><rect x="793.5" y="317.81" width="6.5" height="1.1" fill="#1c1c1c"/><rect x="781" y="327.71" width="19.5" height="1.2" fill="#1c1c1c"/><rect x="793.5" y="337.71" width="6.5" height="1.1" fill="#1c1c1c"/><rect x="793.5" y="347.65" width="6.5" height="1.1" fill="#1c1c1c"/><rect x="793.5" y="357.60" width="6.5" height="1.1" fill="#1c1c1c"/><rect x="793.5" y="367.54" width="6.5" height="1.1" fill="#1c1c1c"/><rect x="781" y="377.44" width="19.5" height="1.2" fill="#1c1c1c"/><rect x="793.5" y="387.44" width="6.5" height="1.1" fill="#1c1c1c"/><rect x="793.5" y="397.38" width="6.5" height="1.1" fill="#1c1c1c"/><rect x="793.5" y="407.33" width="6.5" height="1.1" fill="#1c1c1c"/><rect x="793.5" y="417.27" width="6.5" height="1.1" fill="#1c1c1c"/><rect x="781" y="427.17" width="19.5" height="1.2" fill="#1c1c1c"/><rect x="793.5" y="437.17" width="6.5" height="1.1" fill="#1c1c1c"/><rect x="793.5" y="447.11" width="6.5" height="1.1" fill="#1c1c1c"/><rect x="793.5" y="457.06" width="6.5" height="1.1" fill="#1c1c1c"/><rect x="793.5" y="467.00" width="6.5" height="1.1" fill="#1c1c1c"/><rect x="781" y="476.90" width="19.5" height="1.2" fill="#1c1c1c"/><rect x="793.5" y="486.90" width="6.5" height="1.1" fill="#1c1c1c"/><rect x="793.5" y="496.84" width="6.5" height="1.1" fill="#1c1c1c"/><rect x="793.5" y="506.79" width="6.5" height="1.1" fill="#1c1c1c"/><rect x="793.5" y="516.73" width="6.5" height="1.1" fill="#1c1c1c"/><rect x="781" y="526.63" width="19.5" height="1.2" fill="#1c1c1c"/><rect x="793.5" y="536.63" width="6.5" height="1.1" fill="#1c1c1c"/><rect x="793.5" y="546.57" width="6.5" height="1.1" fill="#1c1c1c"/><rect x="793.5" y="556.52" width="6.5" height="1.1" fill="#1c1c1c"/><rect x="793.5" y="566.46" width="6.5" height="1.1" fill="#1c1c1c"/><rect x="781" y="576.36" width="19.5" height="1.2" fill="#1c1c1c"/><rect x="793.5" y="586.36" width="6.5" height="1.1" fill="#1c1c1c"/><rect x="793.5" y="596.30" width="6.5" height="1.1" fill="#1c1c1c"/><rect x="793.5" y="606.25" width="6.5" height="1.1" fill="#1c1c1c"/><rect x="793.5" y="616.19" width="6.5" height="1.1" fill="#1c1c1c"/><rect x="781" y="626.09" width="19.5" height="1.2" fill="#1c1c1c"/><rect x="793.5" y="636.09" width="6.5" height="1.1" fill="#1c1c1c"/><rect x="793.5" y="646.03" width="6.5" height="1.1" fill="#1c1c1c"/></svg>
<div style="left:781px;top:622px;width:18.5px;height:29px;background:#0a0a0a;"></div>
<div style="left:781px;top:632.7px;width:18.5px;height:1px;background:repeating-linear-gradient(90deg,#e8e8e8 0 3px,#0a0a0a 3px 4px,#e8e8e8 4px 5.5px,#0a0a0a 5.5px 6.5px,#e8e8e8 6.5px 19px);"></div>
<div style="left:781px;top:636.4px;width:12px;height:1px;background:#e0e0e0;"></div>
<div style="left:781px;top:645.5px;width:18.5px;height:1px;background:repeating-linear-gradient(90deg,#e8e8e8 0 3px,#0a0a0a 3px 4px,#e8e8e8 4px 5.5px,#0a0a0a 5.5px 6.5px,#e8e8e8 6.5px 19px);"></div>
<div style="left:781px;top:648.6px;width:18.5px;height:1.4px;background:#f4f4f4;"></div>
<div style="left:1832.5px;top:99.5px;width:16px;height:553.5px;background:linear-gradient(90deg,#f1f1f1,#fdfdfd 40%,#fafafa);border-left:1px solid #e2e2e2;"></div>
<div style="left:1836.8px;top:162px;width:7.4px;height:254px;background:#c3c3c3;border-radius:4px;"></div>
<div style="left:780.5px;top:653px;width:1068px;height:24.5px;background:#f0f0f0;border-top:1.5px solid #8d8d8d;"></div>
<span class="t" style="left:791.50px;top:660.00px;font-size:11.4px;color:#111;letter-spacing:-0.433px;">JPEG (Document)</span>
<svg style="left:1589px;top:663px" width="10" height="10" viewBox="0 0 10 10"><rect x="0" y="1" width="1.6" height="8" fill="#7e7e7e"/><path d="M9 1 V9 L2.6 5Z" fill="#7e7e7e"/></svg>
<svg style="left:1605px;top:663px" width="10" height="10" viewBox="0 0 10 10"><path d="M.8 1 V9 L8 5Z" fill="none" stroke="#7e7e7e" stroke-width="1.1"/></svg>
<svg style="left:1620.5px;top:663px" width="10" height="10" viewBox="0 0 10 10"><path d="M0 1 V9 L6.4 5Z" fill="#7e7e7e"/><rect x="7.2" y="1" width="1.6" height="8" fill="#7e7e7e"/></svg>
<span class="t" style="left:1637.50px;top:660.30px;font-size:11.5px;color:#224;">1</span>
<svg style="left:1653px;top:663px" width="10" height="10" viewBox="0 0 10 10"><path d="M5.4 1 V9 L0 5Z" fill="#7e7e7e"/><rect x="6.6" y="1" width="1.5" height="8" fill="#7e7e7e"/></svg>
<svg style="left:1668px;top:663px" width="10" height="10" viewBox="0 0 10 10"><rect x="0" y="1" width="1.5" height="8" fill="#7e7e7e"/><path d="M2.8 1 V9 L8.2 5Z" fill="#7e7e7e"/></svg>
<svg style="left:1684.5px;top:662.5px" width="12" height="12" viewBox="0 0 12 12"><circle cx="6" cy="6" r="5" fill="#fff" stroke="#e8564e" stroke-width="1.6"/><path d="M3.8 3.8L8.2 8.2M8.2 3.8L3.8 8.2" stroke="#e8564e" stroke-width="1.6"/></svg>
<div style="left:1703px;top:656px;width:78px;height:18.5px;background:#f4f4f4;"></div>
<span class="t" style="left:1710.60px;top:658.50px;font-size:11.6px;color:#111;letter-spacing:0.346px;">864 x 1180</span>
<div style="left:1784px;top:656px;width:45px;height:18.5px;background:#f4f4f4;"></div>
<span class="t" style="left:1788.80px;top:658.50px;font-size:11.6px;color:#111;letter-spacing:-0.667px;">100%</span>
<svg style="left:1819.5px;top:669px" width="6" height="4"><path d="M0 0H5L2.5 3Z" fill="#111"/></svg>
<div style="left:780.5px;top:677.5px;width:1068px;height:2.5px;background:#8a8a8a;"></div>
<div class="strip" style="left:780.5px;top:680px;width:1068px;height:17.5px;"></div>
<div class="tabA" style="left:781.5px;top:680px;width:70.2px;height:17.5px;"></div>
<span class="t" style="left:794.00px;top:681.05px;font-size:11.5px;color:#1f1f1f;letter-spacing:-0.191px;text-shadow:0 0 .4px #333;">Properties</span>
<svg style="left:785px;top:683.8px" width="6" height="10" viewBox="0 0 6 10"><path d="M.8 3.6L3 1L5.2 3.6M.8 6.4L3 9L5.2 6.4" stroke="#333" stroke-width="1" fill="none"/></svg>
<div class="tabI" style="left:851.7px;top:680px;width:104.7px;height:17.5px;"></div>
<span class="t" style="left:858.50px;top:681.05px;font-size:11.5px;color:#2b2b2b;letter-spacing:-0.174px;text-shadow:0 0 .4px #333;">Symbol Properties</span>
<svg style="left:1830.7px;top:684.5px" width="15" height="8" viewBox="0 0 15 8"><path d="M0 2.2H4.4L2.2 5Z" fill="#4a4a4a"/><path d="M6 .8H14.5M6 3H14.5M6 5.2H14.5M6 7.4H14.5" stroke="#5e5e5e" stroke-width="1"/></svg>
<div style="left:780.5px;top:697.5px;width:1068px;height:100px;background:#efefef;"></div>
<div style="left:780.5px;top:797.5px;width:1068px;height:2.5px;background:#9a9a9a;"></div>
<div style="left:906.8px;top:698px;width:1px;height:99.5px;background:#b9b9b9;"></div>
<div style="left:907.8px;top:698px;width:1px;height:99.5px;background:#fbfbfb;"></div>
<div style="left:1104.7px;top:698px;width:1px;height:99.5px;background:#b9b9b9;"></div>
<div style="left:1105.7px;top:698px;width:1px;height:99.5px;background:#fbfbfb;"></div>
<div style="left:1302.8px;top:698px;width:1px;height:99.5px;background:#b9b9b9;"></div>
<div style="left:1303.8px;top:698px;width:1px;height:99.5px;background:#fbfbfb;"></div>
<div style="left:1515px;top:698px;width:1px;height:99.5px;background:#b9b9b9;"></div>
<div style="left:1516px;top:698px;width:1px;height:99.5px;background:#fbfbfb;"></div>
<div style="left:781.5px;top:747.6px;width:126px;height:1px;background:#b9b9b9;"></div>
<div style="left:781.5px;top:748.6px;width:126px;height:1px;background:#fbfbfb;"></div>
<span class="t" style="left:816.20px;top:714.70px;font-size:11.5px;color:#111;letter-spacing:0.047px;">4 Objects</span>
<div style="left:787.5px;top:761px;width:1px;height:5px;border-left:1px dotted #888;"></div>
<div style="left:787.5px;top:772px;width:1px;height:12px;border-left:1px dotted #888;"></div>
<div style="left:788px;top:761px;width:5px;height:1px;border-top:1px dotted #888;"></div>
<div style="left:788px;top:784px;width:5px;height:1px;border-top:1px dotted #888;"></div>
<div style="left:785px;top:770.5px;width:5.6px;height:5.6px;background:#fff;border:1px solid #333;"></div>
<span class="t" style="left:795.00px;top:755.20px;font-size:11.5px;color:#111;letter-spacing:-0.921px;">W:</span>
<div class="fld" style="left:811px;top:753.5px;width:36.3px;height:16.5px;"></div>
<span class="t" style="left:814.50px;top:754.55px;font-size:11.5px;color:#111;letter-spacing:0.105px;">451</span>
<span class="t" style="left:852.50px;top:755.20px;font-size:11.5px;color:#111;letter-spacing:-0.683px;">X:</span>
<div class="fld" style="left:867.6px;top:753.5px;width:35.9px;height:16.5px;"></div>
<span class="t" style="left:871.10px;top:754.55px;font-size:11.5px;color:#111;letter-spacing:0.105px;">264</span>
<span class="t" style="left:795.50px;top:777.00px;font-size:11.5px;color:#111;letter-spacing:-0.500px;">H:</span>
<div class="fld" style="left:811px;top:775.6px;width:36.3px;height:16.4px;"></div>
<span class="t" style="left:814.50px;top:776.60px;font-size:11.5px;color:#111;letter-spacing:0.105px;">516</span>
<span class="t" style="left:852.50px;top:777.00px;font-size:11.5px;color:#111;letter-spacing:-0.366px;">Y:</span>
<div class="fld" style="left:867.6px;top:775.6px;width:35.9px;height:16.4px;"></div>
<span class="t" style="left:871.10px;top:776.60px;font-size:11.5px;color:#111;letter-spacing:0.105px;">159</span>
<svg style="left:915px;top:703.5px" width="15" height="16" viewBox="0 0 15 16"><path d="M4 8.5 L8.5 4 L13 8.5 L8.5 13Z" fill="#f4f4f4" stroke="#222" stroke-width="1.1"/><path d="M7.5 5 Q5 1 7 1 Q9 1.4 8.6 5" fill="none" stroke="#222"/><path d="M4 8.5 Q2 11.5 2.4 13.4 Q4 14 4.4 12Z" fill="#222"/></svg>
<div style="left:930px;top:703px;width:22.5px;height:19px;background:#fff;border:1px solid #c4c4c4;"></div>
<div style="left:936px;top:708px;width:5.5px;height:5.5px;background:#f1f1f1;"></div>
<div style="left:941.5px;top:713.5px;width:5.5px;height:4.5px;background:#f1f1f1;"></div>
<svg style="left:945.5px;top:716.5px" width="5" height="4"><path d="M0 0H5L2.5 3Z" fill="#111"/></svg>
<div class="btn" style="left:1015.3px;top:704px;width:18.7px;height:18.7px;"></div>
<svg style="left:1018.65px;top:707.3px" width="12" height="12" viewBox="0 0 12 12"><path d="M2.2 10H9.8V2.4" fill="none" stroke="#b9b9b9" stroke-width="1.1"/><path d="M2 10.2L9.8 2.2" stroke="#cc2222" stroke-width="1.5"/></svg>
<div class="btn" style="left:1036px;top:704px;width:18.6px;height:18.7px;"></div>
<svg style="left:1039.3px;top:707.3px" width="12" height="12" viewBox="0 0 12 12"><rect x="2" y="2" width="8" height="8" rx="1" fill="#fafafa" stroke="#8a8a8a" stroke-width="1"/></svg>
<div class="btnp" style="left:1056px;top:704px;width:19px;height:18.7px;"></div>
<svg style="left:1059.5px;top:707.3px" width="12" height="12" viewBox="0 0 12 12"><defs><linearGradient id="fg1" x1="0" x2="1"><stop offset="0" stop-color="#fff"/><stop offset="1" stop-color="#222"/></linearGradient></defs><rect x="1.5" y="1.5" width="9" height="9" fill="url(#fg1)" stroke="#333" stroke-width="1"/></svg>
<div class="btn" style="left:1077px;top:704px;width:18.5px;height:18.7px;"></div>
<svg style="left:1080.25px;top:707.3px" width="12" height="12" viewBox="0 0 12 12"><rect x="1.5" y="1.5" width="9" height="9" fill="#fff" stroke="#222" stroke-width="1"/><path d="M1.5 1.5h3v3h-3zM7.5 1.5h3v3h-3zM4.5 4.5h3v3h-3zM1.5 7.5h3v3h-3zM7.5 7.5h3v3h-3z" fill="#222"/></svg>
<span class="t" style="left:926.00px;top:727.60px;font-size:11.5px;color:#111;letter-spacing:-0.490px;">Edge:</span>
<div class="dd" style="left:957.5px;top:728px;width:81.5px;height:16.7px;"></div>
<svg style="left:1027px;top:731.35px" width="6" height="10" viewBox="0 0 6 10"><path d="M3 .6L5.4 3.8H.6Z M3 9.4L.6 6.2H5.4Z" fill="#333"/></svg>
<span class="t" style="left:963.70px;top:728.65px;font-size:11.5px;color:#111;letter-spacing:0.293px;">Anti-Alias</span>
<div class="fldd" style="left:1044.4px;top:728px;width:30.6px;height:16.7px;"></div>
<span class="t" style="left:1047.90px;top:729.15px;font-size:11.5px;color:#111;">0</span>
<div class="btnd" style="left:1080px;top:728px;width:15.5px;height:16.7px;"></div>
<svg style="left:1084.25px;top:734.15px" width="7" height="5"><path d="M0 0H7L3.5 4.6Z" fill="#b2b2b2"/></svg>
<span class="t" style="left:911.60px;top:751.40px;font-size:11.5px;color:#111;letter-spacing:0.137px;">Texture:</span>
<div class="dd" style="left:957.5px;top:752px;width:81.5px;height:16.5px;"></div>
<svg style="left:1027px;top:755.25px" width="6" height="10" viewBox="0 0 6 10"><path d="M3 .6L5.4 3.8H.6Z M3 9.4L.6 6.2H5.4Z" fill="#333"/></svg>
<span class="t" style="left:963.70px;top:752.55px;font-size:11.5px;color:#111;letter-spacing:-0.224px;">Grain</span>
<div class="fld" style="left:1044.4px;top:752px;width:30.6px;height:16.5px;"></div>
<span class="t" style="left:1047.90px;top:753.05px;font-size:11.5px;color:#111;letter-spacing:-1.561px;">0%</span>
<div class="btn" style="left:1080px;top:752px;width:15.5px;height:16.5px;"></div>
<svg style="left:1084.25px;top:758.05px" width="7" height="5"><path d="M0 0H7L3.5 4.6Z" fill="#333"/></svg>
<div style="left:956px;top:777.8px;width:13px;height:13.2px;background:linear-gradient(#fcfcfc,#ececec);border:1px solid #cfcfcf;border-radius:3px;"></div>
<span class="t" style="left:974.00px;top:776.30px;font-size:11.5px;color:#8e8e8e;letter-spacing:0.021px;">Transparent</span>
<div class="btnd" style="left:1074px;top:775px;width:21.5px;height:18px;"></div>
<div style="left:1078.5px;top:778.5px;width:12.5px;height:11px;background:linear-gradient(90deg,#f2f2f2,#8e8e8e);"></div>
<div style="left:1078.5px;top:779.6px;width:9px;height:1px;background:linear-gradient(90deg,#f4f4f4,rgba(244,244,244,0));"></div>
<div style="left:1078.5px;top:781.7px;width:9px;height:1px;background:linear-gradient(90deg,#f4f4f4,rgba(244,244,244,0));"></div>
<div style="left:1078.5px;top:783.8px;width:9px;height:1px;background:linear-gradient(90deg,#f4f4f4,rgba(244,244,244,0));"></div>
<div style="left:1078.5px;top:785.9px;width:9px;height:1px;background:linear-gradient(90deg,#f4f4f4,rgba(244,244,244,0));"></div>
<div style="left:1078.5px;top:788px;width:9px;height:1px;background:linear-gradient(90deg,#f4f4f4,rgba(244,244,244,0));"></div>
<svg style="left:1108px;top:704px" width="14" height="16" viewBox="0 0 14 16"><path d="M11 1.5 L12.8 3.2 L4.2 12.6 L1.4 14 L2.4 11Z" fill="#ddd" stroke="#222" stroke-width="1"/></svg>
<div style="left:1123.4px;top:702.8px;width:23.2px;height:18.8px;background:#fff;border:1px solid #b4b4b4;"></div>
<svg style="left:1125px;top:704px" width="20" height="16"><path d="M3.5 14 L16 2.5" stroke="#e8261c" stroke-width="2"/></svg>
<svg style="left:1139.5px;top:716px" width="5" height="4"><path d="M0 0H5L2.5 3Z" fill="#111"/></svg>
<div class="fldd" style="left:1150px;top:704px;width:34px;height:16.8px;"></div>
<span class="t" style="left:1153.50px;top:705.20px;font-size:11.5px;color:#111;">0</span>
<div class="btnd" style="left:1188px;top:704px;width:15px;height:16.8px;"></div>
<svg style="left:1192px;top:710.2px" width="7" height="5"><path d="M0 0H7L3.5 4.6Z" fill="#b2b2b2"/></svg>
<div class="dd" style="left:1207.4px;top:704px;width:87.9px;height:16.8px;"></div>
<svg style="left:1283.3px;top:707.4px" width="6" height="10" viewBox="0 0 6 10"><path d="M3 .6L5.4 3.8H.6Z M3 9.4L.6 6.2H5.4Z" fill="#333"/></svg>
<span class="t" style="left:1213.60px;top:704.70px;font-size:11.5px;color:#111;letter-spacing:-0.373px;">None</span>
<div class="btn" style="left:1109.4px;top:726.8px;width:17.6px;height:18.8px;"></div>
<svg style="left:1111.2px;top:729.2px" width="14" height="14" viewBox="0 0 14 14"><rect x="4" y="4" width="6" height="6" fill="#ddd"/><path d="M2.5 2.5H11.5V11.5H2.5Z" fill="none" stroke="#222" stroke-width="1.2"/><path d="M1 1h3v3h-3zM10 1h3v3h-3zM1 10h3v3h-3zM10 10h3v3h-3z" fill="#222"/></svg>
<div class="btnp" style="left:1129px;top:726.8px;width:19px;height:18.8px;"></div>
<svg style="left:1131.5px;top:729.2px" width="14" height="14" viewBox="0 0 14 14"><rect x="3" y="3" width="8" height="8" fill="#bbb"/><path d="M2.5 2.5H11.5V11.5H2.5Z" fill="none" stroke="#222" stroke-width="1.2"/><path d="M1 1h3v3h-3zM10 1h3v3h-3zM1 10h3v3h-3zM10 10h3v3h-3z" fill="#222"/></svg>
<div class="btn" style="left:1150px;top:726.8px;width:18.5px;height:18.8px;"></div>
<svg style="left:1152.25px;top:729.2px" width="14" height="14" viewBox="0 0 14 14"><rect x="3" y="3" width="8" height="8" fill="#eee"/><path d="M2.5 2.5H11.5V11.5H2.5Z" fill="none" stroke="#222" stroke-width="1.2"/><path d="M1 1h3v3h-3zM10 1h3v3h-3zM1 10h3v3h-3zM10 10h3v3h-3z" fill="#222"/></svg>
<span class="t" style="left:1186.00px;top:728.50px;font-size:11.5px;color:#111;letter-spacing:-0.410px;">Edge:</span>
<div style="left:1217px;top:726.8px;width:19px;height:18.8px;background:#fff;border:1px solid #c9c9c9;"></div>
<div class="fldd" style="left:1241.6px;top:728px;width:33.4px;height:16.7px;"></div>
<span class="t" style="left:1245.10px;top:729.15px;font-size:11.5px;color:#111;">0</span>
<div class="btnd" style="left:1279.6px;top:728px;width:15.9px;height:16.7px;"></div>
<svg style="left:1284.05px;top:734.15px" width="7" height="5"><path d="M0 0H7L3.5 4.6Z" fill="#b2b2b2"/></svg>
<span class="t" style="left:1111.00px;top:753.00px;font-size:11.5px;color:#111;letter-spacing:0.262px;">Texture:</span>
<div class="dd" style="left:1157.8px;top:752.7px;width:78.2px;height:16.9px;"></div>
<svg style="left:1224px;top:756.15px" width="6" height="10" viewBox="0 0 6 10"><path d="M3 .6L5.4 3.8H.6Z M3 9.4L.6 6.2H5.4Z" fill="#9a9a9a"/></svg>
<span class="t" style="left:1164.00px;top:753.45px;font-size:11.5px;color:#8f8f8f;letter-spacing:-0.224px;">Grain</span>
<div class="fldd" style="left:1243px;top:752.7px;width:33px;height:16.9px;"></div>
<span class="t" style="left:1246.50px;top:753.95px;font-size:11.5px;color:#111;letter-spacing:-1.561px;">0%</span>
<div class="btnd" style="left:1280.5px;top:752.7px;width:15.5px;height:16.9px;"></div>
<svg style="left:1284.75px;top:758.95px" width="7" height="5"><path d="M0 0H7L3.5 4.6Z" fill="#b2b2b2"/></svg>
<div style="left:1167.7px;top:778.7px;width:83.3px;height:16.3px;background:linear-gradient(#fbfbfb,#ececec);border:1px solid #cdcdcd;border-radius:4px;"></div>
<span class="t" style="left:1181.30px;top:779.20px;font-size:11.5px;color:#a2a2a2;letter-spacing:-0.022px;">Edit Stroke</span>
<div class="btnd" style="left:1257.5px;top:777.5px;width:17.5px;height:18px;"></div>
<div class="btnd" style="left:1278.5px;top:777.5px;width:18.5px;height:18px;"></div>
<svg style="left:1260px;top:780.5px" width="13" height="12" viewBox="0 0 13 12"><path d="M4.5 1.5H11V10.5H4.5" fill="none" stroke="#bdbdbd" stroke-width="1.1"/><path d="M1 6H6M3.5 3.5V8.5" stroke="#a8a8a8" stroke-width="1.3"/></svg>
<svg style="left:1282.5px;top:780px" width="11" height="13" viewBox="0 0 11 13"><path d="M2.5 4.5H8.5V12H2.5ZM1.5 3H9.5M4 2.6Q5.5 .6 7 2.6M4.5 6V10.5M6.5 6V10.5" fill="none" stroke="#c2c2c2" stroke-width="1"/></svg>
<div style="left:1308px;top:703px;width:11px;height:18.5px;background:#f4f4f4;border:1.3px solid #222;border-radius:1.5px;"></div>
<div style="left:1310px;top:706px;width:3.5px;height:4px;background:#bbb;"></div>
<div style="left:1313.5px;top:710px;width:3.5px;height:4px;background:#bbb;"></div>
<div style="left:1310px;top:714px;width:3.5px;height:4px;background:#bbb;"></div>
<div class="fldd" style="left:1323.4px;top:704px;width:33.9px;height:16.8px;"></div>
<span class="t" style="left:1326.90px;top:705.20px;font-size:11.5px;color:#111;letter-spacing:0.838px;">---</span>
<div class="btn" style="left:1361.4px;top:704px;width:15.4px;height:16.8px;"></div>
<svg style="left:1365.6px;top:710.2px" width="7" height="5"><path d="M0 0H7L3.5 4.6Z" fill="#333"/></svg>
<div class="dd" style="left:1381.3px;top:704px;width:123.2px;height:17px;"></div>
<svg style="left:1492.5px;top:707.5px" width="6" height="10" viewBox="0 0 6 10"><path d="M3 .6L5.4 3.8H.6Z M3 9.4L.6 6.2H5.4Z" fill="#333"/></svg>
<span class="t" style="left:1311.50px;top:728.50px;font-size:11.5px;color:#111;letter-spacing:-0.037px;">Filters:</span>
<div class="btn" style="left:1348.4px;top:727.4px;width:18px;height:18.2px;"></div>
<svg style="left:1351.5px;top:730px" width="13" height="14" viewBox="0 0 13 14"><path d="M1.5 6H10.5M6 1.5V10.5" stroke="#111" stroke-width="2"/><path d="M7 10.5H12L9.5 13.5Z" fill="#111"/></svg>
<div class="btnd" style="left:1370px;top:727.4px;width:17.6px;height:18.2px;"></div>
<div style="left:1374.5px;top:735.5px;width:8.5px;height:1.5px;background:#b3b3b3;"></div>
<div style="left:1307.4px;top:749.5px;width:195px;height:42.5px;background:#fff;border:1px solid #8f8f8f;border-top:1.5px solid #6e6e6e;"></div>
<div style="left:1491px;top:751px;width:10.5px;height:40px;background:linear-gradient(90deg,#f2f2f2,#fcfcfc);"></div>
<div class="btnp" style="left:1531.6px;top:702.8px;width:22.1px;height:19.2px;"></div>
<svg style="left:1535.65px;top:705.4px" width="14" height="14" viewBox="0 0 14 14"><rect x="4" y="4" width="6.5" height="6.5" fill="#f4f4f4" stroke="#555" stroke-width="1"/></svg>
<div class="btn" style="left:1559px;top:702.8px;width:22px;height:19.2px;"></div>
<svg style="left:1563px;top:705.4px" width="14" height="14" viewBox="0 0 14 14"><rect x="2" y="2" width="7" height="7" fill="#e4e4e4" stroke="#777"/><rect x="5" y="5" width="7" height="7" fill="#e4e4e4" stroke="#777"/></svg>
<div class="btn" style="left:1586px;top:702.8px;width:22px;height:19.2px;"></div>
<svg style="left:1590px;top:705.4px" width="14" height="14" viewBox="0 0 14 14"><rect x="5" y="5" width="7" height="7" fill="#f4f4f4" stroke="#aaa"/><path d="M2 2H9V5H5V9H2Z" fill="#e8e8e8" stroke="#333" stroke-width="1.2"/></svg>
<div class="btn" style="left:1613px;top:702.8px;width:22.6px;height:19.2px;"></div>
<svg style="left:1617.3px;top:705.4px" width="14" height="14" viewBox="0 0 14 14"><rect x="2" y="2" width="7" height="7" fill="#f4f4f4" stroke="#555"/><rect x="5" y="5" width="7" height="7" fill="#f4f4f4" stroke="#555"/><rect x="5" y="5" width="4" height="4" fill="#111"/></svg>
<div class="btn" style="left:1640.5px;top:702.8px;width:22.3px;height:19.2px;"></div>
<svg style="left:1644.65px;top:705.4px" width="14" height="14" viewBox="0 0 14 14"><rect x="2" y="2" width="7" height="7" fill="#ddd" stroke="#333"/><circle cx="9" cy="9" r="3.4" fill="#f4f4f4" stroke="#555"/><path d="M5.5 9H9V5.5" stroke="#222" stroke-width="1.3" fill="none"/></svg>
<div style="left:1559.6px;top:727px;width:75px;height:16.6px;background:linear-gradient(#fbfbfb,#ececec);border:1px solid #cdcdcd;border-radius:4px;"></div>
<span class="t" style="left:1574.00px;top:727.60px;font-size:11.5px;color:#a2a2a2;letter-spacing:-0.003px;">Combine</span>
<div class="dd" style="left:1531.6px;top:749.5px;width:132px;height:17.2px;"></div>
<svg style="left:1651.6px;top:753.1px" width="6" height="10" viewBox="0 0 6 10"><path d="M3 .6L5.4 3.8H.6Z M3 9.4L.6 6.2H5.4Z" fill="#333"/></svg>
<div class="btnd" style="left:1531.6px;top:773.3px;width:22.1px;height:19.2px;"></div>
<svg style="left:1535.65px;top:775.9px" width="14" height="14" viewBox="0 0 14 14"><rect x="3" y="4" width="7" height="7" fill="none" stroke="#c4c4c4"/><path d="M6 7H9V10" stroke="#c4c4c4" fill="none"/></svg>
<div class="btnd" style="left:1559px;top:773.3px;width:22px;height:19.2px;"></div>
<svg style="left:1563px;top:775.9px" width="14" height="14" viewBox="0 0 14 14"><rect x="1.5" y="3" width="6" height="6" fill="none" stroke="#c4c4c4"/><path d="M10 3Q13 5 10.5 9M10 3L12 2.5M10 3L10.5 5" stroke="#c4c4c4" fill="none"/></svg>
<div class="btnd" style="left:1586px;top:773.3px;width:22px;height:19.2px;"></div>
<svg style="left:1590px;top:775.9px" width="14" height="14" viewBox="0 0 14 14"><rect x="2" y="5" width="6" height="6" fill="none" stroke="#c4c4c4"/><path d="M6 10L12 3M8 5L12 9" stroke="#c4c4c4" fill="none"/></svg>
<div class="btnd" style="left:1613px;top:773.3px;width:22.6px;height:19.2px;"></div>
<svg style="left:1617.3px;top:775.9px" width="14" height="14" viewBox="0 0 14 14"><path d="M1 7H13" stroke="#c4c4c4" stroke-dasharray="2 1.2"/><ellipse cx="5" cy="4.5" rx="3" ry="1.6" fill="none" stroke="#c4c4c4"/><ellipse cx="9.5" cy="9.5" rx="3" ry="1.6" fill="none" stroke="#c4c4c4"/><path d="M7 1V13" stroke="#c4c4c4" stroke-dasharray="1.5 1"/></svg>
<div class="btnd" style="left:1640.5px;top:773.3px;width:22.3px;height:19.2px;"></div>
<svg style="left:1644.65px;top:775.9px" width="14" height="14" viewBox="0 0 14 14"><path d="M4 5H10V12.5H4ZM3 3.6H11M5.5 3.2Q7 1.2 8.5 3.2M6 6.5V11M8 6.5V11" fill="none" stroke="#c4c4c4" stroke-width="1"/></svg>
<div style="left:1848.5px;top:34.5px;width:2.5px;height:766px;background:#8e8e8e;"></div>
<div style="left:1851px;top:34.5px;width:266.5px;height:12px;background:linear-gradient(#858585,#a2a2a2);border-bottom:1px solid #7d7d7d;"></div>
<svg style="left:2106.5px;top:37.5px" width="9" height="6"><path d="M0 0L3.6 2.7L0 5.4ZM4.2 0L7.8 2.7L4.2 5.4Z" fill="#4a4a4a"/></svg>
<div class="strip" style="left:1851px;top:46.5px;width:266.5px;height:17px;"></div>
<div class="tabA" style="left:1851px;top:46.5px;width:58px;height:17px;"></div>
<span class="t" style="left:1857.25px;top:47.30px;font-size:11.5px;color:#1f1f1f;letter-spacing:0.016px;text-shadow:0 0 .4px #333;">Optimize</span>
<div class="tabI" style="left:1909px;top:46.5px;width:50px;height:17px;"></div>
<span class="t" style="left:1916.00px;top:47.30px;font-size:11.5px;color:#2b2b2b;letter-spacing:0.032px;text-shadow:0 0 .4px #333;">History</span>
<div class="tabI" style="left:1959px;top:46.5px;width:40px;height:17px;"></div>
<span class="t" style="left:1966.00px;top:47.30px;font-size:11.5px;color:#2b2b2b;letter-spacing:0.086px;text-shadow:0 0 .4px #333;">Align</span>
<svg style="left:2100px;top:51px" width="15" height="8" viewBox="0 0 15 8"><path d="M0 2.2H4.4L2.2 5Z" fill="#4a4a4a"/><path d="M6 .8H14.5M6 3H14.5M6 5.2H14.5M6 7.4H14.5" stroke="#5e5e5e" stroke-width="1"/></svg>
<div style="left:1851px;top:63.5px;width:266.5px;height:119.5px;background:#efefef;"></div>
<div style="left:1852px;top:75.5px;width:30px;height:1px;background:#b5b5b5;"></div>
<div style="left:1852px;top:76.5px;width:30px;height:1px;background:#fbfbfb;"></div>
<div style="left:2030px;top:75.5px;width:87px;height:1px;background:#b5b5b5;"></div>
<div style="left:2030px;top:76.5px;width:87px;height:1px;background:#fbfbfb;"></div>
<div class="dd" style="left:1883px;top:68px;width:145.6px;height:17px;"></div>
<svg style="left:2016.6px;top:71.5px" width="6" height="10" viewBox="0 0 6 10"><path d="M3 .6L5.4 3.8H.6Z M3 9.4L.6 6.2H5.4Z" fill="#333"/></svg>
<div class="dd" style="left:1854px;top:91px;width:100.3px;height:17px;"></div>
<svg style="left:1942.3px;top:94.5px" width="6" height="10" viewBox="0 0 6 10"><path d="M3 .6L5.4 3.8H.6Z M3 9.4L.6 6.2H5.4Z" fill="#333"/></svg>
<span class="t" style="left:1860.20px;top:91.80px;font-size:10.3px;color:#111;letter-spacing:-0.976px;">JPEG</span>
<span class="t" style="left:1966.50px;top:90.70px;font-size:11.5px;color:#111;letter-spacing:0.091px;">Matte:</span>
<div style="left:2002.5px;top:90px;width:22.5px;height:18.5px;background:#fff;border:1px solid #b4b4b4;"></div>
<svg style="left:2004px;top:91.5px" width="20" height="16"><path d="M4 13.5 L15.5 2.5" stroke="#e8261c" stroke-width="2"/></svg>
<svg style="left:2018.5px;top:103px" width="5" height="4"><path d="M0 0H5L2.5 3Z" fill="#111"/></svg>
<span class="t" style="left:1959.00px;top:117.60px;font-size:11.5px;color:#111;letter-spacing:0.127px;">Quality:</span>
<div class="fld" style="left:2002.5px;top:119px;width:34.5px;height:17px;"></div>
<span class="t" style="left:2006.00px;top:120.30px;font-size:11.5px;color:#111;letter-spacing:-0.603px;">100%</span>
<div class="btn" style="left:2041px;top:119px;width:16px;height:17px;"></div>
<svg style="left:2045.5px;top:125.3px" width="7" height="5"><path d="M0 0H7L3.5 4.6Z" fill="#333"/></svg>
<span class="t" style="left:1910.50px;top:140.20px;font-size:11.5px;color:#111;letter-spacing:-0.019px;">Selective Quality:</span>
<div class="fldd" style="left:2002.5px;top:142px;width:34.5px;height:16.5px;"></div>
<span class="t" style="left:2006.00px;top:143.05px;font-size:11.5px;color:#111;letter-spacing:-0.145px;">90</span>
<div style="left:2040px;top:141.5px;width:17px;height:17.5px;background:#f6f6f6;border:1px solid #7f7f7f;"></div>
<svg style="left:2042px;top:143.5px" width="13" height="13" viewBox="0 0 13 13"><rect x="1" y="2.5" width="8.5" height="8" fill="#cdd7f0" stroke="#223" stroke-width="1"/><path d="M11.5 1 L12.5 2.2 L6.5 8.6 L4.6 9.2 L5.2 7.4Z" fill="#f5c21c" stroke="#333" stroke-width=".7"/><path d="M2 11.5H10" stroke="#111" stroke-width="1.4"/></svg>
<span class="t" style="left:1940.50px;top:162.60px;font-size:11.5px;color:#111;letter-spacing:0.033px;">Smoothing:</span>
<div class="fld" style="left:2002.5px;top:164px;width:34.5px;height:17px;"></div>
<span class="t" style="left:2006.00px;top:165.30px;font-size:11.5px;color:#111;">0</span>
<div class="dd" style="left:2041px;top:164px;width:17px;height:17.5px;border-radius:4px;"></div>
<svg style="left:2046.5px;top:167.8px" width="6" height="10" viewBox="0 0 6 10"><path d="M3 .6L5.4 3.8H.6Z M3 9.4L.6 6.2H5.4Z" fill="#333"/></svg>
<div style="left:1851px;top:283.5px;width:266.5px;height:46px;background:#efefef;"></div>
<div style="left:1852px;top:183px;width:265px;height:100.5px;background:#fff;border-left:1px solid #9a9a9a;border-bottom:1.5px solid #8a8a8a;"></div>
<div style="left:2103.5px;top:183px;width:13.5px;height:99.5px;background:linear-gradient(90deg,#f3f3f3,#fdfdfd);"></div>
<div style="left:2116.5px;top:183px;width:1px;height:100px;background:#9a9a9a;"></div>
<span class="t" style="left:1878.00px;top:288.30px;font-size:11.5px;color:#111;letter-spacing:0.143px;">Sort:</span>
<div class="dd" style="left:1906px;top:289px;width:82px;height:17px;"></div>
<svg style="left:1976px;top:292.5px" width="6" height="10" viewBox="0 0 6 10"><path d="M3 .6L5.4 3.8H.6Z M3 9.4L.6 6.2H5.4Z" fill="#9a9a9a"/></svg>
<span class="t" style="left:1912.20px;top:289.80px;font-size:11.5px;color:#8f8f8f;letter-spacing:-0.373px;">None</span>
<span class="t" style="left:2049.00px;top:288.80px;font-size:11.5px;color:#111;letter-spacing:0.092px;">0 colors</span>
<div style="left:1853px;top:311px;width:77px;height:15.5px;background:linear-gradient(#e9e9e9,#f4f4f4);border:1px solid #d6d6d6;border-radius:4px 0 0 4px;"></div>
<div class="btnd" style="left:1930px;top:310.5px;width:18.5px;height:16.5px;"></div>
<div class="btnd" style="left:1948.5px;top:310.5px;width:18.5px;height:16.5px;"></div>
<div class="btnd" style="left:1967px;top:310.5px;width:18.5px;height:16.5px;"></div>
<svg style="left:1933px;top:312.5px" width="13" height="13" viewBox="0 0 13 13"><defs><linearGradient id="cw" x1="0" y1="0" x2="1" y2="1"><stop offset="0" stop-color="#f48a8a"/><stop offset=".35" stop-color="#e8e06a"/><stop offset=".65" stop-color="#7ed08a"/><stop offset="1" stop-color="#8a9af0"/></linearGradient></defs><circle cx="6.5" cy="6.5" r="5.4" fill="url(#cw)" stroke="#9a9a9a" stroke-width=".8"/></svg>
<svg style="left:1951.5px;top:312.5px" width="13" height="13" viewBox="0 0 13 13"><path d="M6.5 1L11.5 3.5V9.5L6.5 12L1.5 9.5V3.5ZM1.5 3.5L6.5 6L11.5 3.5M6.5 6V12" fill="none" stroke="#8c8c8c" stroke-width="1"/></svg>
<svg style="left:1970.5px;top:312.5px" width="12" height="13" viewBox="0 0 12 13"><rect x="2" y="5.5" width="8" height="6" fill="none" stroke="#8c8c8c"/><path d="M3.8 5.5V3.8Q6 1 8.2 3.8V5.5" fill="none" stroke="#8c8c8c"/><rect x="5.4" y="7.6" width="1.3" height="2" fill="#8c8c8c"/></svg>
<div class="btnd" style="left:2065px;top:310.5px;width:18px;height:16.5px;"></div>
<div class="btnd" style="left:2085px;top:310.5px;width:17.5px;height:16.5px;"></div>
<svg style="left:2067.5px;top:312px" width="13" height="13" viewBox="0 0 14 14"><rect x="3" y="4" width="7" height="7" fill="none" stroke="#c4c4c4"/><path d="M6 7H9V10" stroke="#c4c4c4" fill="none"/></svg>
<svg style="left:2087.5px;top:311.5px" width="13" height="14" viewBox="0 0 14 14"><path d="M4 5H10V12.5H4ZM3 3.6H11M5.5 3.2Q7 1.2 8.5 3.2M6 6.5V11M8 6.5V11" fill="none" stroke="#c4c4c4" stroke-width="1"/></svg>
<div style="left:1851px;top:329.5px;width:266.5px;height:2.5px;background:#858585;"></div>
<div class="strip" style="left:1851px;top:332px;width:266.5px;height:17px;"></div>
<div class="tabI" style="left:1851px;top:332px;width:42px;height:17px;"></div>
<span class="t" style="left:1857.75px;top:332.80px;font-size:11.5px;color:#2b2b2b;letter-spacing:-0.821px;text-shadow:0 0 .4px #333;">Pages</span>
<div class="tabI" style="left:1893px;top:332px;width:44px;height:17px;"></div>
<span class="t" style="left:1900.00px;top:332.80px;font-size:11.5px;color:#2b2b2b;letter-spacing:-0.433px;text-shadow:0 0 .4px #333;">States</span>
<div class="tabA" style="left:1937px;top:332px;width:46px;height:17px;"></div>
<span class="t" style="left:1944.00px;top:332.80px;font-size:11.5px;color:#1f1f1f;letter-spacing:-0.419px;text-shadow:0 0 .4px #333;">Layers</span>
<svg style="left:2100px;top:336.5px" width="15" height="8" viewBox="0 0 15 8"><path d="M0 2.2H4.4L2.2 5Z" fill="#4a4a4a"/><path d="M6 .8H14.5M6 3H14.5M6 5.2H14.5M6 7.4H14.5" stroke="#5e5e5e" stroke-width="1"/></svg>
<div style="left:1851px;top:349px;width:266.5px;height:353px;background:#efefef;"></div>
<div class="dd" style="left:1851px;top:352px;width:116px;height:16.6px;"></div>
<svg style="left:1955px;top:355.3px" width="6" height="10" viewBox="0 0 6 10"><path d="M3 .6L5.4 3.8H.6Z M3 9.4L.6 6.2H5.4Z" fill="#333"/></svg>
<span class="t" style="left:1975.50px;top:354.00px;font-size:11.5px;color:#111;letter-spacing:0.074px;">Opacity</span>
<div class="fld" style="left:2022px;top:353px;width:33.5px;height:16.5px;"></div>
<span class="t" style="left:2025.50px;top:354.05px;font-size:11.5px;color:#111;letter-spacing:0.838px;">---</span>
<div class="btn" style="left:2060px;top:353px;width:16.5px;height:16.5px;"></div>
<svg style="left:2064.75px;top:359.05px" width="7" height="5"><path d="M0 0H7L3.5 4.6Z" fill="#333"/></svg>
<div style="left:1851px;top:373px;width:253px;height:1px;background:#c4c4c4;"></div>
<div style="left:2103.5px;top:349px;width:14px;height:353px;background:#fbfbfb;"></div>
<div style="left:2103.5px;top:373px;width:13.5px;height:329px;background:linear-gradient(90deg,#efefef,#fdfdfd 45%);"></div>
<div style="left:1851px;top:374px;width:253px;height:24px;background:#f1f1f1;border-bottom:1px solid #bdbdbd;"></div>
<div style="left:1887.4px;top:374px;width:216.6px;height:24px;background:#dedbd3;border-bottom:1px solid #bdbdbd;border-left:1px solid #c4c4c4;"></div>
<div style="left:2088.5px;top:374px;width:1px;height:24px;background:#c4c4c4;"></div>
<div style="left:1869px;top:374px;width:1px;height:24px;background:#d2d2d2;"></div>
<div style="left:1853px;top:378.8px;width:13px;height:13px;background:#f5f5f5;border:1px solid #a6a6a6;border-right-color:#fafafa;border-bottom-color:#fafafa;"></div>
<div style="left:1872.2px;top:378.8px;width:13px;height:13px;background:#f5f5f5;border:1px solid #a6a6a6;border-right-color:#fafafa;border-bottom-color:#fafafa;"></div>
<svg style="left:1890.5px;top:382.3px" width="9" height="8"><path d="M0 0H8.6L4.3 7.4Z" fill="#333"/></svg>
<svg style="left:1908.5px;top:380.3px" width="17" height="12" viewBox="0 0 17 12"><path d="M.8 10.8V2.4Q.8 1.4 1.8 1.4H5L6.4 3H12Q13 3 13 4V5" fill="#f2f2f2" stroke="#8c8c8c" stroke-width=".9"/><path d="M.8 10.8L3.4 5H16L13.4 10.8Z" fill="#fafafa" stroke="#7c7c7c" stroke-width=".9"/></svg>
<svg style="left:2073px;top:381.8px" width="12" height="9" viewBox="0 0 12 9"><rect x="4" y=".8" width="4" height="7.4" fill="none" stroke="#9a9a9a"/><path d="M4 4.5H8M0 4.5L2.8 2.3V6.7ZM12 4.5L9.2 2.3V6.7Z" stroke="#9a9a9a" fill="#9a9a9a" stroke-width=".6"/></svg>
<div style="left:2092px;top:382.1px;width:8.4px;height:8.4px;border:1.2px solid #bcbcbc;border-radius:50%;background:#f4f4f4;"></div>
<span class="t" style="left:1928.00px;top:377.80px;font-size:11.5px;color:#111;letter-spacing:-0.266px;">Web Layer</span>
<div style="left:1851px;top:398px;width:253px;height:24px;background:#f1f1f1;border-bottom:1px solid #bdbdbd;"></div>
<div style="left:1887.4px;top:398px;width:216.6px;height:24px;background:#f1f1f1;border-bottom:1px solid #bdbdbd;border-left:1px solid #c4c4c4;"></div>
<div style="left:2088.5px;top:398px;width:1px;height:24px;background:#c4c4c4;"></div>
<div style="left:1869px;top:398px;width:1px;height:24px;background:#d2d2d2;"></div>
<div style="left:1853px;top:402.8px;width:13px;height:13px;background:#f5f5f5;border:1px solid #a6a6a6;border-right-color:#fafafa;border-bottom-color:#fafafa;"></div>
<div style="left:1872.2px;top:402.8px;width:13px;height:13px;background:#f5f5f5;border:1px solid #a6a6a6;border-right-color:#fafafa;border-bottom-color:#fafafa;"></div>
<svg style="left:1891px;top:405.8px" width="8" height="9"><path d="M0 0V8.6L7.2 4.3Z" fill="#333"/></svg>
<svg style="left:1908.5px;top:404.1px" width="15" height="12" viewBox="0 0 15 12"><defs><linearGradient id="fo" x1="0" y1="0" x2="0" y2="1"><stop offset="0" stop-color="#f6f6f6"/><stop offset="1" stop-color="#bcbcbc"/></linearGradient></defs><path d="M.8 10.8V2.4Q.8 1.4 1.8 1.4H5L6.4 3H13Q14 3 14 4V10.8Z" fill="url(#fo)" stroke="#9c9c9c" stroke-width=".9"/></svg>
<div style="left:2092px;top:406.1px;width:8.4px;height:8.4px;border:1.3px solid #222;border-radius:50%;background:#fff;"></div>
<span class="t" style="left:1928.00px;top:401.80px;font-size:11.5px;color:#111;letter-spacing:-1.015px;">BITS</span>
<div style="left:1851px;top:422px;width:253px;height:24px;background:#f1f1f1;border-bottom:1px solid #bdbdbd;"></div>
<div style="left:1887.4px;top:422px;width:216.6px;height:24px;background:#f1f1f1;border-bottom:1px solid #bdbdbd;border-left:1px solid #c4c4c4;"></div>
<div style="left:2088.5px;top:422px;width:1px;height:24px;background:#c4c4c4;"></div>
<div style="left:1869px;top:422px;width:1px;height:24px;background:#d2d2d2;"></div>
<div style="left:1853px;top:426.8px;width:13px;height:13px;background:#f5f5f5;border:1px solid #a6a6a6;border-right-color:#fafafa;border-bottom-color:#fafafa;"></div>
<div style="left:1872.2px;top:426.8px;width:13px;height:13px;background:#f5f5f5;border:1px solid #a6a6a6;border-right-color:#fafafa;border-bottom-color:#fafafa;"></div>
<svg style="left:1874.4px;top:428.2px" width="9" height="11" viewBox="0 0 9 11"><rect x=".8" y="4.6" width="7.4" height="5.8" fill="#fff" stroke="#111" stroke-width="1.2"/><path d="M2.4 4.6V3Q4.5 .2 6.6 3V4.6" fill="none" stroke="#111" stroke-width="1.2"/><rect x="3.8" y="6.4" width="1.4" height="2.2" fill="#111"/></svg>
<svg style="left:1891px;top:429.8px" width="8" height="9"><path d="M0 0V8.6L7.2 4.3Z" fill="#333"/></svg>
<svg style="left:1908.5px;top:428.1px" width="15" height="12" viewBox="0 0 15 12"><defs><linearGradient id="fo" x1="0" y1="0" x2="0" y2="1"><stop offset="0" stop-color="#f6f6f6"/><stop offset="1" stop-color="#bcbcbc"/></linearGradient></defs><path d="M.8 10.8V2.4Q.8 1.4 1.8 1.4H5L6.4 3H13Q14 3 14 4V10.8Z" fill="url(#fo)" stroke="#9c9c9c" stroke-width=".9"/></svg>
<div style="left:2092px;top:430.1px;width:8.4px;height:8.4px;border:1.3px solid #222;border-radius:50%;background:#fff;"></div>
<span class="t" style="left:1928.00px;top:425.80px;font-size:11.5px;color:#111;letter-spacing:-0.011px;">type v2</span>
<div style="left:1851px;top:446px;width:253px;height:24px;background:#f1f1f1;border-bottom:1px solid #bdbdbd;"></div>
<div style="left:1887.4px;top:446px;width:216.6px;height:24px;background:#f1f1f1;border-bottom:1px solid #bdbdbd;border-left:1px solid #c4c4c4;"></div>
<div style="left:2088.5px;top:446px;width:1px;height:24px;background:#c4c4c4;"></div>
<div style="left:1869px;top:446px;width:1px;height:24px;background:#d2d2d2;"></div>
<div style="left:1853px;top:450.8px;width:13px;height:13px;background:#f5f5f5;border:1px solid #a6a6a6;border-right-color:#fafafa;border-bottom-color:#fafafa;"></div>
<div style="left:1872.2px;top:450.8px;width:13px;height:13px;background:#f5f5f5;border:1px solid #a6a6a6;border-right-color:#fafafa;border-bottom-color:#fafafa;"></div>
<svg style="left:1853.4px;top:452.9px" width="13" height="10" viewBox="0 0 13 10"><path d="M.8 5.2Q6.3 -.2 12.2 4.8Q7 10 .8 5.2Z" fill="#fdfdfd" stroke="#222" stroke-width=".9"/><circle cx="5.9" cy="4.8" r="2.5" fill="#111"/><circle cx="5.1" cy="4" r=".8" fill="#fff"/><path d="M.6 4.4Q6.3 -1.4 12.4 4" stroke="#222" stroke-width="1.2" fill="none"/><path d="M2 7.4Q6.5 10.4 11 7" stroke="#777" stroke-width=".8" fill="none"/></svg>
<svg style="left:1874.4px;top:452.2px" width="9" height="11" viewBox="0 0 9 11"><rect x=".8" y="4.6" width="7.4" height="5.8" fill="#fff" stroke="#111" stroke-width="1.2"/><path d="M2.4 4.6V3Q4.5 .2 6.6 3V4.6" fill="none" stroke="#111" stroke-width="1.2"/><rect x="3.8" y="6.4" width="1.4" height="2.2" fill="#111"/></svg>
<svg style="left:1891px;top:453.8px" width="8" height="9"><path d="M0 0V8.6L7.2 4.3Z" fill="#333"/></svg>
<svg style="left:1908.5px;top:452.1px" width="15" height="12" viewBox="0 0 15 12"><defs><linearGradient id="fo" x1="0" y1="0" x2="0" y2="1"><stop offset="0" stop-color="#f6f6f6"/><stop offset="1" stop-color="#bcbcbc"/></linearGradient></defs><path d="M.8 10.8V2.4Q.8 1.4 1.8 1.4H5L6.4 3H13Q14 3 14 4V10.8Z" fill="url(#fo)" stroke="#9c9c9c" stroke-width=".9"/></svg>
<div style="left:2092px;top:454.1px;width:8.4px;height:8.4px;border:1.3px solid #222;border-radius:50%;background:#fff;"></div>
<span class="t" style="left:1928.00px;top:449.80px;font-size:11.5px;color:#111;letter-spacing:0.091px;">vingette</span>
<div style="left:1851px;top:470px;width:253px;height:24px;background:#f1f1f1;border-bottom:1px solid #bdbdbd;"></div>
<div style="left:1887.4px;top:470px;width:216.6px;height:24px;background:#f1f1f1;border-bottom:1px solid #bdbdbd;border-left:1px solid #c4c4c4;"></div>
<div style="left:2088.5px;top:470px;width:1px;height:24px;background:#c4c4c4;"></div>
<div style="left:1869px;top:470px;width:1px;height:24px;background:#d2d2d2;"></div>
<div style="left:1853px;top:474.8px;width:13px;height:13px;background:#f5f5f5;border:1px solid #a6a6a6;border-right-color:#fafafa;border-bottom-color:#fafafa;"></div>
<div style="left:1872.2px;top:474.8px;width:13px;height:13px;background:#f5f5f5;border:1px solid #a6a6a6;border-right-color:#fafafa;border-bottom-color:#fafafa;"></div>
<svg style="left:1853.4px;top:476.9px" width="13" height="10" viewBox="0 0 13 10"><path d="M.8 5.2Q6.3 -.2 12.2 4.8Q7 10 .8 5.2Z" fill="#fdfdfd" stroke="#222" stroke-width=".9"/><circle cx="5.9" cy="4.8" r="2.5" fill="#111"/><circle cx="5.1" cy="4" r=".8" fill="#fff"/><path d="M.6 4.4Q6.3 -1.4 12.4 4" stroke="#222" stroke-width="1.2" fill="none"/><path d="M2 7.4Q6.5 10.4 11 7" stroke="#777" stroke-width=".8" fill="none"/></svg>
<svg style="left:1891px;top:477.8px" width="8" height="9"><path d="M0 0V8.6L7.2 4.3Z" fill="#333"/></svg>
<svg style="left:1908.5px;top:476.1px" width="15" height="12" viewBox="0 0 15 12"><defs><linearGradient id="fo" x1="0" y1="0" x2="0" y2="1"><stop offset="0" stop-color="#f6f6f6"/><stop offset="1" stop-color="#bcbcbc"/></linearGradient></defs><path d="M.8 10.8V2.4Q.8 1.4 1.8 1.4H5L6.4 3H13Q14 3 14 4V10.8Z" fill="url(#fo)" stroke="#9c9c9c" stroke-width=".9"/></svg>
<div style="left:2092px;top:478.1px;width:8.4px;height:8.4px;border:1.3px solid #222;border-radius:50%;background:#fff;"></div>
<span class="t" style="left:1928.00px;top:473.80px;font-size:11.5px;color:#111;letter-spacing:0.219px;">line detailing</span>
<div style="left:1851px;top:494px;width:253px;height:24px;background:#f1f1f1;border-bottom:1px solid #bdbdbd;"></div>
<div style="left:1887.4px;top:494px;width:216.6px;height:24px;background:#f1f1f1;border-bottom:1px solid #bdbdbd;border-left:1px solid #c4c4c4;"></div>
<div style="left:2088.5px;top:494px;width:1px;height:24px;background:#c4c4c4;"></div>
<div style="left:1869px;top:494px;width:1px;height:24px;background:#d2d2d2;"></div>
<div style="left:1853px;top:498.8px;width:13px;height:13px;background:#f5f5f5;border:1px solid #a6a6a6;border-right-color:#fafafa;border-bottom-color:#fafafa;"></div>
<div style="left:1872.2px;top:498.8px;width:13px;height:13px;background:#f5f5f5;border:1px solid #a6a6a6;border-right-color:#fafafa;border-bottom-color:#fafafa;"></div>
<svg style="left:1853.4px;top:500.9px" width="13" height="10" viewBox="0 0 13 10"><path d="M.8 5.2Q6.3 -.2 12.2 4.8Q7 10 .8 5.2Z" fill="#fdfdfd" stroke="#222" stroke-width=".9"/><circle cx="5.9" cy="4.8" r="2.5" fill="#111"/><circle cx="5.1" cy="4" r=".8" fill="#fff"/><path d="M.6 4.4Q6.3 -1.4 12.4 4" stroke="#222" stroke-width="1.2" fill="none"/><path d="M2 7.4Q6.5 10.4 11 7" stroke="#777" stroke-width=".8" fill="none"/></svg>
<svg style="left:1891px;top:501.8px" width="8" height="9"><path d="M0 0V8.6L7.2 4.3Z" fill="#333"/></svg>
<svg style="left:1908.5px;top:500.1px" width="15" height="12" viewBox="0 0 15 12"><defs><linearGradient id="fo" x1="0" y1="0" x2="0" y2="1"><stop offset="0" stop-color="#f6f6f6"/><stop offset="1" stop-color="#bcbcbc"/></linearGradient></defs><path d="M.8 10.8V2.4Q.8 1.4 1.8 1.4H5L6.4 3H13Q14 3 14 4V10.8Z" fill="url(#fo)" stroke="#9c9c9c" stroke-width=".9"/></svg>
<div style="left:2092px;top:502.1px;width:8.4px;height:8.4px;border:1.3px solid #222;border-radius:50%;background:#fff;"></div>
<span class="t" style="left:1928.00px;top:497.80px;font-size:11.5px;color:#111;letter-spacing:0.038px;">surfacing</span>
<div style="left:1851px;top:518px;width:253px;height:24px;background:#f1f1f1;border-bottom:1px solid #bdbdbd;"></div>
<div style="left:1887.4px;top:518px;width:216.6px;height:24px;background:#ddebfb;border-bottom:1px solid #bdbdbd;border-left:1px solid #c4c4c4;"></div>
<div style="left:2088.5px;top:518px;width:1px;height:24px;background:#c4c4c4;"></div>
<div style="left:1869px;top:518px;width:1px;height:24px;background:#d2d2d2;"></div>
<div style="left:1853px;top:522.8px;width:13px;height:13px;background:#f5f5f5;border:1px solid #a6a6a6;border-right-color:#fafafa;border-bottom-color:#fafafa;"></div>
<div style="left:1872.2px;top:522.8px;width:13px;height:13px;background:#f5f5f5;border:1px solid #a6a6a6;border-right-color:#fafafa;border-bottom-color:#fafafa;"></div>
<svg style="left:1853.4px;top:524.9px" width="13" height="10" viewBox="0 0 13 10"><path d="M.8 5.2Q6.3 -.2 12.2 4.8Q7 10 .8 5.2Z" fill="#fdfdfd" stroke="#222" stroke-width=".9"/><circle cx="5.9" cy="4.8" r="2.5" fill="#111"/><circle cx="5.1" cy="4" r=".8" fill="#fff"/><path d="M.6 4.4Q6.3 -1.4 12.4 4" stroke="#222" stroke-width="1.2" fill="none"/><path d="M2 7.4Q6.5 10.4 11 7" stroke="#777" stroke-width=".8" fill="none"/></svg>
<svg style="left:1891px;top:525.8px" width="8" height="9"><path d="M0 0V8.6L7.2 4.3Z" fill="#333"/></svg>
<svg style="left:1908.5px;top:524.1px" width="15" height="12" viewBox="0 0 15 12"><defs><linearGradient id="fo" x1="0" y1="0" x2="0" y2="1"><stop offset="0" stop-color="#f6f6f6"/><stop offset="1" stop-color="#bcbcbc"/></linearGradient></defs><path d="M.8 10.8V2.4Q.8 1.4 1.8 1.4H5L6.4 3H13Q14 3 14 4V10.8Z" fill="url(#fo)" stroke="#9c9c9c" stroke-width=".9"/></svg>
<div style="left:2092px;top:526.1px;width:8.4px;height:8.4px;border:1.3px solid #222;border-radius:50%;background:#fff;"></div>
<div style="left:2094.7px;top:528.8px;width:3px;height:3px;background:#222;border-radius:50%;"></div>
<span class="t" style="left:1928.00px;top:521.80px;font-size:11.5px;color:#111;letter-spacing:0.134px;">bunny</span>
<div style="left:1851px;top:542px;width:253px;height:24px;background:#f1f1f1;border-bottom:1px solid #bdbdbd;"></div>
<div style="left:1887.4px;top:542px;width:216.6px;height:24px;background:#f1f1f1;border-bottom:1px solid #bdbdbd;border-left:1px solid #c4c4c4;"></div>
<div style="left:2088.5px;top:542px;width:1px;height:24px;background:#c4c4c4;"></div>
<div style="left:1869px;top:542px;width:1px;height:24px;background:#d2d2d2;"></div>
<div style="left:1853px;top:546.8px;width:13px;height:13px;background:#f5f5f5;border:1px solid #a6a6a6;border-right-color:#fafafa;border-bottom-color:#fafafa;"></div>
<div style="left:1872.2px;top:546.8px;width:13px;height:13px;background:#f5f5f5;border:1px solid #a6a6a6;border-right-color:#fafafa;border-bottom-color:#fafafa;"></div>
<svg style="left:1874.4px;top:548.2px" width="9" height="11" viewBox="0 0 9 11"><rect x=".8" y="4.6" width="7.4" height="5.8" fill="#fff" stroke="#111" stroke-width="1.2"/><path d="M2.4 4.6V3Q4.5 .2 6.6 3V4.6" fill="none" stroke="#111" stroke-width="1.2"/><rect x="3.8" y="6.4" width="1.4" height="2.2" fill="#111"/></svg>
<svg style="left:1891px;top:549.8px" width="8" height="9"><path d="M0 0V8.6L7.2 4.3Z" fill="#333"/></svg>
<svg style="left:1908.5px;top:548.1px" width="15" height="12" viewBox="0 0 15 12"><defs><linearGradient id="fo" x1="0" y1="0" x2="0" y2="1"><stop offset="0" stop-color="#f6f6f6"/><stop offset="1" stop-color="#bcbcbc"/></linearGradient></defs><path d="M.8 10.8V2.4Q.8 1.4 1.8 1.4H5L6.4 3H13Q14 3 14 4V10.8Z" fill="url(#fo)" stroke="#9c9c9c" stroke-width=".9"/></svg>
<div style="left:2092px;top:550.1px;width:8.4px;height:8.4px;border:1.3px solid #222;border-radius:50%;background:#fff;"></div>
<span class="t" style="left:1928.00px;top:545.80px;font-size:11.5px;color:#111;letter-spacing:0.027px;">fur</span>
<div style="left:1851px;top:566px;width:253px;height:24px;background:#f1f1f1;border-bottom:1px solid #bdbdbd;"></div>
<div style="left:1887.4px;top:566px;width:216.6px;height:24px;background:#ddebfb;border-bottom:1px solid #bdbdbd;border-left:1px solid #c4c4c4;"></div>
<div style="left:2088.5px;top:566px;width:1px;height:24px;background:#c4c4c4;"></div>
<div style="left:1869px;top:566px;width:1px;height:24px;background:#d2d2d2;"></div>
<div style="left:1853px;top:570.8px;width:13px;height:13px;background:#f5f5f5;border:1px solid #a6a6a6;border-right-color:#fafafa;border-bottom-color:#fafafa;"></div>
<div style="left:1872.2px;top:570.8px;width:13px;height:13px;background:#f5f5f5;border:1px solid #a6a6a6;border-right-color:#fafafa;border-bottom-color:#fafafa;"></div>
<svg style="left:1853.4px;top:572.9px" width="13" height="10" viewBox="0 0 13 10"><path d="M.8 5.2Q6.3 -.2 12.2 4.8Q7 10 .8 5.2Z" fill="#fdfdfd" stroke="#222" stroke-width=".9"/><circle cx="5.9" cy="4.8" r="2.5" fill="#111"/><circle cx="5.1" cy="4" r=".8" fill="#fff"/><path d="M.6 4.4Q6.3 -1.4 12.4 4" stroke="#222" stroke-width="1.2" fill="none"/><path d="M2 7.4Q6.5 10.4 11 7" stroke="#777" stroke-width=".8" fill="none"/></svg>
<svg style="left:1891px;top:573.8px" width="8" height="9"><path d="M0 0V8.6L7.2 4.3Z" fill="#333"/></svg>
<svg style="left:1908.5px;top:572.1px" width="15" height="12" viewBox="0 0 15 12"><defs><linearGradient id="fo" x1="0" y1="0" x2="0" y2="1"><stop offset="0" stop-color="#f6f6f6"/><stop offset="1" stop-color="#bcbcbc"/></linearGradient></defs><path d="M.8 10.8V2.4Q.8 1.4 1.8 1.4H5L6.4 3H13Q14 3 14 4V10.8Z" fill="url(#fo)" stroke="#9c9c9c" stroke-width=".9"/></svg>
<div style="left:2092px;top:574.1px;width:8.4px;height:8.4px;border:1.3px solid #222;border-radius:50%;background:#fff;"></div>
<div style="left:2094.7px;top:576.8px;width:3px;height:3px;background:#222;border-radius:50%;"></div>
<span class="t" style="left:1928.00px;top:569.80px;font-size:11.5px;color:#111;letter-spacing:-0.373px;">ear</span>
<div style="left:1851px;top:590px;width:253px;height:24px;background:#f1f1f1;border-bottom:1px solid #bdbdbd;"></div>
<div style="left:1887.4px;top:590px;width:216.6px;height:24px;background:#f1f1f1;border-bottom:1px solid #bdbdbd;border-left:1px solid #c4c4c4;"></div>
<div style="left:2088.5px;top:590px;width:1px;height:24px;background:#c4c4c4;"></div>
<div style="left:1869px;top:590px;width:1px;height:24px;background:#d2d2d2;"></div>
<div style="left:1853px;top:594.8px;width:13px;height:13px;background:#f5f5f5;border:1px solid #a6a6a6;border-right-color:#fafafa;border-bottom-color:#fafafa;"></div>
<div style="left:1872.2px;top:594.8px;width:13px;height:13px;background:#f5f5f5;border:1px solid #a6a6a6;border-right-color:#fafafa;border-bottom-color:#fafafa;"></div>
<svg style="left:1853.4px;top:596.9px" width="13" height="10" viewBox="0 0 13 10"><path d="M.8 5.2Q6.3 -.2 12.2 4.8Q7 10 .8 5.2Z" fill="#fdfdfd" stroke="#222" stroke-width=".9"/><circle cx="5.9" cy="4.8" r="2.5" fill="#111"/><circle cx="5.1" cy="4" r=".8" fill="#fff"/><path d="M.6 4.4Q6.3 -1.4 12.4 4" stroke="#222" stroke-width="1.2" fill="none"/><path d="M2 7.4Q6.5 10.4 11 7" stroke="#777" stroke-width=".8" fill="none"/></svg>
<svg style="left:1891px;top:597.8px" width="8" height="9"><path d="M0 0V8.6L7.2 4.3Z" fill="#333"/></svg>
<svg style="left:1908.5px;top:596.1px" width="15" height="12" viewBox="0 0 15 12"><defs><linearGradient id="fo" x1="0" y1="0" x2="0" y2="1"><stop offset="0" stop-color="#f6f6f6"/><stop offset="1" stop-color="#bcbcbc"/></linearGradient></defs><path d="M.8 10.8V2.4Q.8 1.4 1.8 1.4H5L6.4 3H13Q14 3 14 4V10.8Z" fill="url(#fo)" stroke="#9c9c9c" stroke-width=".9"/></svg>
<div style="left:2092px;top:598.1px;width:8.4px;height:8.4px;border:1.3px solid #222;border-radius:50%;background:#fff;"></div>
<span class="t" style="left:1928.00px;top:593.80px;font-size:11.5px;color:#111;letter-spacing:0.217px;">crumbs</span>
<div style="left:1851px;top:614px;width:253px;height:24px;background:#f1f1f1;border-bottom:1px solid #bdbdbd;"></div>
<div style="left:1887.4px;top:614px;width:216.6px;height:24px;background:#f1f1f1;border-bottom:1px solid #bdbdbd;border-left:1px solid #c4c4c4;"></div>
<div style="left:2088.5px;top:614px;width:1px;height:24px;background:#c4c4c4;"></div>
<div style="left:1869px;top:614px;width:1px;height:24px;background:#d2d2d2;"></div>
<div style="left:1853px;top:618.8px;width:13px;height:13px;background:#f5f5f5;border:1px solid #a6a6a6;border-right-color:#fafafa;border-bottom-color:#fafafa;"></div>
<div style="left:1872.2px;top:618.8px;width:13px;height:13px;background:#f5f5f5;border:1px solid #a6a6a6;border-right-color:#fafafa;border-bottom-color:#fafafa;"></div>
<svg style="left:1853.4px;top:620.9px" width="13" height="10" viewBox="0 0 13 10"><path d="M.8 5.2Q6.3 -.2 12.2 4.8Q7 10 .8 5.2Z" fill="#fdfdfd" stroke="#222" stroke-width=".9"/><circle cx="5.9" cy="4.8" r="2.5" fill="#111"/><circle cx="5.1" cy="4" r=".8" fill="#fff"/><path d="M.6 4.4Q6.3 -1.4 12.4 4" stroke="#222" stroke-width="1.2" fill="none"/><path d="M2 7.4Q6.5 10.4 11 7" stroke="#777" stroke-width=".8" fill="none"/></svg>
<svg style="left:1891px;top:621.8px" width="8" height="9"><path d="M0 0V8.6L7.2 4.3Z" fill="#333"/></svg>
<svg style="left:1908.5px;top:620.1px" width="15" height="12" viewBox="0 0 15 12"><defs><linearGradient id="fo" x1="0" y1="0" x2="0" y2="1"><stop offset="0" stop-color="#f6f6f6"/><stop offset="1" stop-color="#bcbcbc"/></linearGradient></defs><path d="M.8 10.8V2.4Q.8 1.4 1.8 1.4H5L6.4 3H13Q14 3 14 4V10.8Z" fill="url(#fo)" stroke="#9c9c9c" stroke-width=".9"/></svg>
<div style="left:2092px;top:622.1px;width:8.4px;height:8.4px;border:1.3px solid #222;border-radius:50%;background:#fff;"></div>
<span class="t" style="left:1928.00px;top:617.80px;font-size:11.5px;color:#111;letter-spacing:-0.023px;">shadow</span>
<div style="left:1851px;top:638px;width:253px;height:24px;background:#f1f1f1;border-bottom:1px solid #bdbdbd;"></div>
<div style="left:1887.4px;top:638px;width:216.6px;height:24px;background:#f1f1f1;border-bottom:1px solid #bdbdbd;border-left:1px solid #c4c4c4;"></div>
<div style="left:2088.5px;top:638px;width:1px;height:24px;background:#c4c4c4;"></div>
<div style="left:1869px;top:638px;width:1px;height:24px;background:#d2d2d2;"></div>
<div style="left:1853px;top:642.8px;width:13px;height:13px;background:#f5f5f5;border:1px solid #a6a6a6;border-right-color:#fafafa;border-bottom-color:#fafafa;"></div>
<div style="left:1872.2px;top:642.8px;width:13px;height:13px;background:#f5f5f5;border:1px solid #a6a6a6;border-right-color:#fafafa;border-bottom-color:#fafafa;"></div>
<svg style="left:1891px;top:645.8px" width="8" height="9"><path d="M0 0V8.6L7.2 4.3Z" fill="#333"/></svg>
<svg style="left:1908.5px;top:644.1px" width="15" height="12" viewBox="0 0 15 12"><defs><linearGradient id="fo" x1="0" y1="0" x2="0" y2="1"><stop offset="0" stop-color="#f6f6f6"/><stop offset="1" stop-color="#bcbcbc"/></linearGradient></defs><path d="M.8 10.8V2.4Q.8 1.4 1.8 1.4H5L6.4 3H13Q14 3 14 4V10.8Z" fill="url(#fo)" stroke="#9c9c9c" stroke-width=".9"/></svg>
<div style="left:2092px;top:646.1px;width:8.4px;height:8.4px;border:1.3px solid #222;border-radius:50%;background:#fff;"></div>
<span class="t" style="left:1928.00px;top:641.80px;font-size:11.5px;color:#111;letter-spacing:0.082px;">smaple art</span>
<div style="left:1851px;top:662px;width:253px;height:24px;background:#f1f1f1;border-bottom:1px solid #bdbdbd;"></div>
<div style="left:1887.4px;top:662px;width:216.6px;height:24px;background:#f1f1f1;border-bottom:1px solid #bdbdbd;border-left:1px solid #c4c4c4;"></div>
<div style="left:2088.5px;top:662px;width:1px;height:24px;background:#c4c4c4;"></div>
<div style="left:1869px;top:662px;width:1px;height:24px;background:#d2d2d2;"></div>
<div style="left:1853px;top:666.8px;width:13px;height:13px;background:#f5f5f5;border:1px solid #a6a6a6;border-right-color:#fafafa;border-bottom-color:#fafafa;"></div>
<div style="left:1872.2px;top:666.8px;width:13px;height:13px;background:#f5f5f5;border:1px solid #a6a6a6;border-right-color:#fafafa;border-bottom-color:#fafafa;"></div>
<svg style="left:1853.4px;top:668.9px" width="13" height="10" viewBox="0 0 13 10"><path d="M.8 5.2Q6.3 -.2 12.2 4.8Q7 10 .8 5.2Z" fill="#fdfdfd" stroke="#222" stroke-width=".9"/><circle cx="5.9" cy="4.8" r="2.5" fill="#111"/><circle cx="5.1" cy="4" r=".8" fill="#fff"/><path d="M.6 4.4Q6.3 -1.4 12.4 4" stroke="#222" stroke-width="1.2" fill="none"/><path d="M2 7.4Q6.5 10.4 11 7" stroke="#777" stroke-width=".8" fill="none"/></svg>
<svg style="left:1874.4px;top:668.2px" width="9" height="11" viewBox="0 0 9 11"><rect x=".8" y="4.6" width="7.4" height="5.8" fill="#fff" stroke="#111" stroke-width="1.2"/><path d="M2.4 4.6V3Q4.5 .2 6.6 3V4.6" fill="none" stroke="#111" stroke-width="1.2"/><rect x="3.8" y="6.4" width="1.4" height="2.2" fill="#111"/></svg>
<svg style="left:1891px;top:669.8px" width="8" height="9"><path d="M0 0V8.6L7.2 4.3Z" fill="#333"/></svg>
<svg style="left:1908.5px;top:668.1px" width="15" height="12" viewBox="0 0 15 12"><defs><linearGradient id="fo" x1="0" y1="0" x2="0" y2="1"><stop offset="0" stop-color="#f6f6f6"/><stop offset="1" stop-color="#bcbcbc"/></linearGradient></defs><path d="M.8 10.8V2.4Q.8 1.4 1.8 1.4H5L6.4 3H13Q14 3 14 4V10.8Z" fill="url(#fo)" stroke="#9c9c9c" stroke-width=".9"/></svg>
<div style="left:2092px;top:670.1px;width:8.4px;height:8.4px;border:1.3px solid #222;border-radius:50%;background:#fff;"></div>
<span class="t" style="left:1928.00px;top:665.80px;font-size:11.5px;color:#111;letter-spacing:0.141px;">background</span>
<div style="left:1851px;top:701.5px;width:266.5px;height:15px;background:#f3f3f3;border-top:1px solid #a8a8a8;"></div>
<div style="left:1852px;top:702.5px;width:82.5px;height:13.5px;background:#fff;border:1px solid #c6c6c6;"></div>
<span class="t" style="left:1855.50px;top:701.30px;font-size:10.5px;font-weight:700;color:#222;letter-spacing:-0.490px;">State 1</span>
<svg style="left:1924px;top:707.5px" width="7" height="5"><path d="M0 0H6.6L3.3 4.2Z" fill="#333"/></svg>
<div class="btn" style="left:2005px;top:702.5px;width:15.5px;height:13.5px;"></div>
<div class="btn" style="left:2025px;top:702.5px;width:15.5px;height:13.5px;"></div>
<div class="btnd" style="left:2046px;top:702.5px;width:15.5px;height:13.5px;"></div>
<div class="btn" style="left:2066.5px;top:702.5px;width:15.5px;height:13.5px;"></div>
<div class="btn" style="left:2088px;top:702.5px;width:15.5px;height:13.5px;"></div>
<svg style="left:2007px;top:704px" width="12" height="11" viewBox="0 0 12 11"><path d="M3 3.5H6L7 4.6H11V9.8H3Z" fill="#fff" stroke="#222" stroke-width="1"/><path d="M.4 6.5H5M2.7 4.2V8.8" stroke="#111" stroke-width="1.3"/></svg>
<svg style="left:2027px;top:704px" width="12" height="11" viewBox="0 0 12 11"><path d="M3 3.5H6L7 4.6H11V9.8H3Z" fill="#fff" stroke="#222" stroke-width="1"/><path d="M.4 5H5V8M3.5 3.4L5 5L3.5 6.6" stroke="#111" stroke-width="1.2" fill="none"/></svg>
<svg style="left:2048.5px;top:704.5px" width="11" height="10" viewBox="0 0 11 10"><rect x="1" y="1" width="9" height="8" fill="#eee" stroke="#d0d0d0"/><circle cx="5.5" cy="5" r="2.4" fill="#fafafa" stroke="#d6d6d6"/></svg>
<svg style="left:2068.5px;top:703.5px" width="12" height="12" viewBox="0 0 12 12"><rect x="1" y="1" width="8.5" height="9" fill="#fff" stroke="#222" stroke-width="1.1" stroke-dasharray="2 1"/><path d="M5.5 8.5H11M8.2 5.8V11.2" stroke="#111" stroke-width="1.4"/></svg>
<svg style="left:2090.5px;top:703px" width="11" height="13" viewBox="0 0 11 13"><path d="M2.5 4.5H8.5V12H2.5ZM1.5 3H9.5M4 2.6Q5.5 .6 7 2.6M4.5 6V10.5M6.5 6V10.5" fill="#f4f4f4" stroke="#222" stroke-width="1"/></svg>
<div style="left:1851px;top:716.5px;width:266.5px;height:2px;background:#858585;"></div>
<div class="strip" style="left:1851px;top:718.5px;width:266.5px;height:17px;"></div>
<div class="tabA" style="left:1851px;top:718.5px;width:42px;height:17px;"></div>
<span class="t" style="left:1857.25px;top:719.30px;font-size:11.5px;color:#1f1f1f;letter-spacing:-0.303px;text-shadow:0 0 .4px #333;">Styles</span>
<div class="tabI" style="left:1893px;top:718.5px;width:77px;height:17px;"></div>
<span class="t" style="left:1899.50px;top:719.30px;font-size:11.5px;color:#2b2b2b;letter-spacing:-0.190px;text-shadow:0 0 .4px #333;">Color Palette</span>
<div class="tabI" style="left:1970px;top:718.5px;width:60px;height:17px;"></div>
<span class="t" style="left:1976.75px;top:719.30px;font-size:11.5px;color:#2b2b2b;letter-spacing:-0.420px;text-shadow:0 0 .4px #333;">Swatches</span>
<svg style="left:2100px;top:723px" width="15" height="8" viewBox="0 0 15 8"><path d="M0 2.2H4.4L2.2 5Z" fill="#4a4a4a"/><path d="M6 .8H14.5M6 3H14.5M6 5.2H14.5M6 7.4H14.5" stroke="#5e5e5e" stroke-width="1"/></svg>
<div style="left:1851px;top:735.5px;width:266.5px;height:2.5px;background:#8a8a8a;"></div>
<div class="strip" style="left:1851px;top:738px;width:266.5px;height:18.5px;"></div>
<div class="tabA" style="left:1851px;top:738px;width:105px;height:18.5px;"></div>
<span class="t" style="left:1857.50px;top:739.55px;font-size:11.5px;color:#1f1f1f;letter-spacing:-0.286px;text-shadow:0 0 .4px #333;">Special Characters</span>
<div class="tabI" style="left:1956px;top:738px;width:47px;height:18.5px;"></div>
<span class="t" style="left:1963.00px;top:739.55px;font-size:11.5px;color:#2b2b2b;letter-spacing:-0.404px;text-shadow:0 0 .4px #333;">Image E</span>
<div class="tabI" style="left:2003px;top:738px;width:28.4px;height:18.5px;"></div>
<span class="t" style="left:2010.00px;top:739.55px;font-size:11.5px;color:#2b2b2b;letter-spacing:-0.664px;text-shadow:0 0 .4px #333;">Path</span>
<div class="tabI" style="left:2031.4px;top:738px;width:47.6px;height:18.5px;"></div>
<span class="t" style="left:2038.00px;top:739.55px;font-size:11.5px;color:#2b2b2b;letter-spacing:-0.789px;text-shadow:0 0 .4px #333;">Auto Sha</span>
<div style="left:1851px;top:756.5px;width:266.5px;height:3.5px;background:#8a8a8a;"></div>
<div class="strip" style="left:1851px;top:760px;width:266.5px;height:17px;"></div>
<div class="tabA" style="left:1851px;top:760px;width:102px;height:17px;"></div>
<span class="t" style="left:1857.25px;top:760.80px;font-size:11.5px;color:#1f1f1f;letter-spacing:-0.078px;text-shadow:0 0 .4px #333;">Document Library</span>
<div class="tabI" style="left:1953px;top:760px;width:97px;height:17px;"></div>
<span class="t" style="left:1960.00px;top:760.80px;font-size:11.5px;color:#2b2b2b;letter-spacing:-0.142px;text-shadow:0 0 .4px #333;">Common Library</span>
<svg style="left:2100px;top:764.5px" width="15" height="8" viewBox="0 0 15 8"><path d="M0 2.2H4.4L2.2 5Z" fill="#4a4a4a"/><path d="M6 .8H14.5M6 3H14.5M6 5.2H14.5M6 7.4H14.5" stroke="#5e5e5e" stroke-width="1"/></svg>
<div style="left:1851px;top:777px;width:266.5px;height:4px;background:#8a8a8a;"></div>
<div class="strip" style="left:1851px;top:781px;width:266.5px;height:17px;"></div>
<div class="tabA" style="left:1851px;top:781px;width:86px;height:17px;"></div>
<span class="t" style="left:1857.75px;top:781.80px;font-size:11.5px;color:#1f1f1f;letter-spacing:-0.482px;text-shadow:0 0 .4px #333;">CSS Properties</span>
<div style="left:1851px;top:798px;width:266.5px;height:2px;background:#8a8a8a;"></div>
</div></body></html>
